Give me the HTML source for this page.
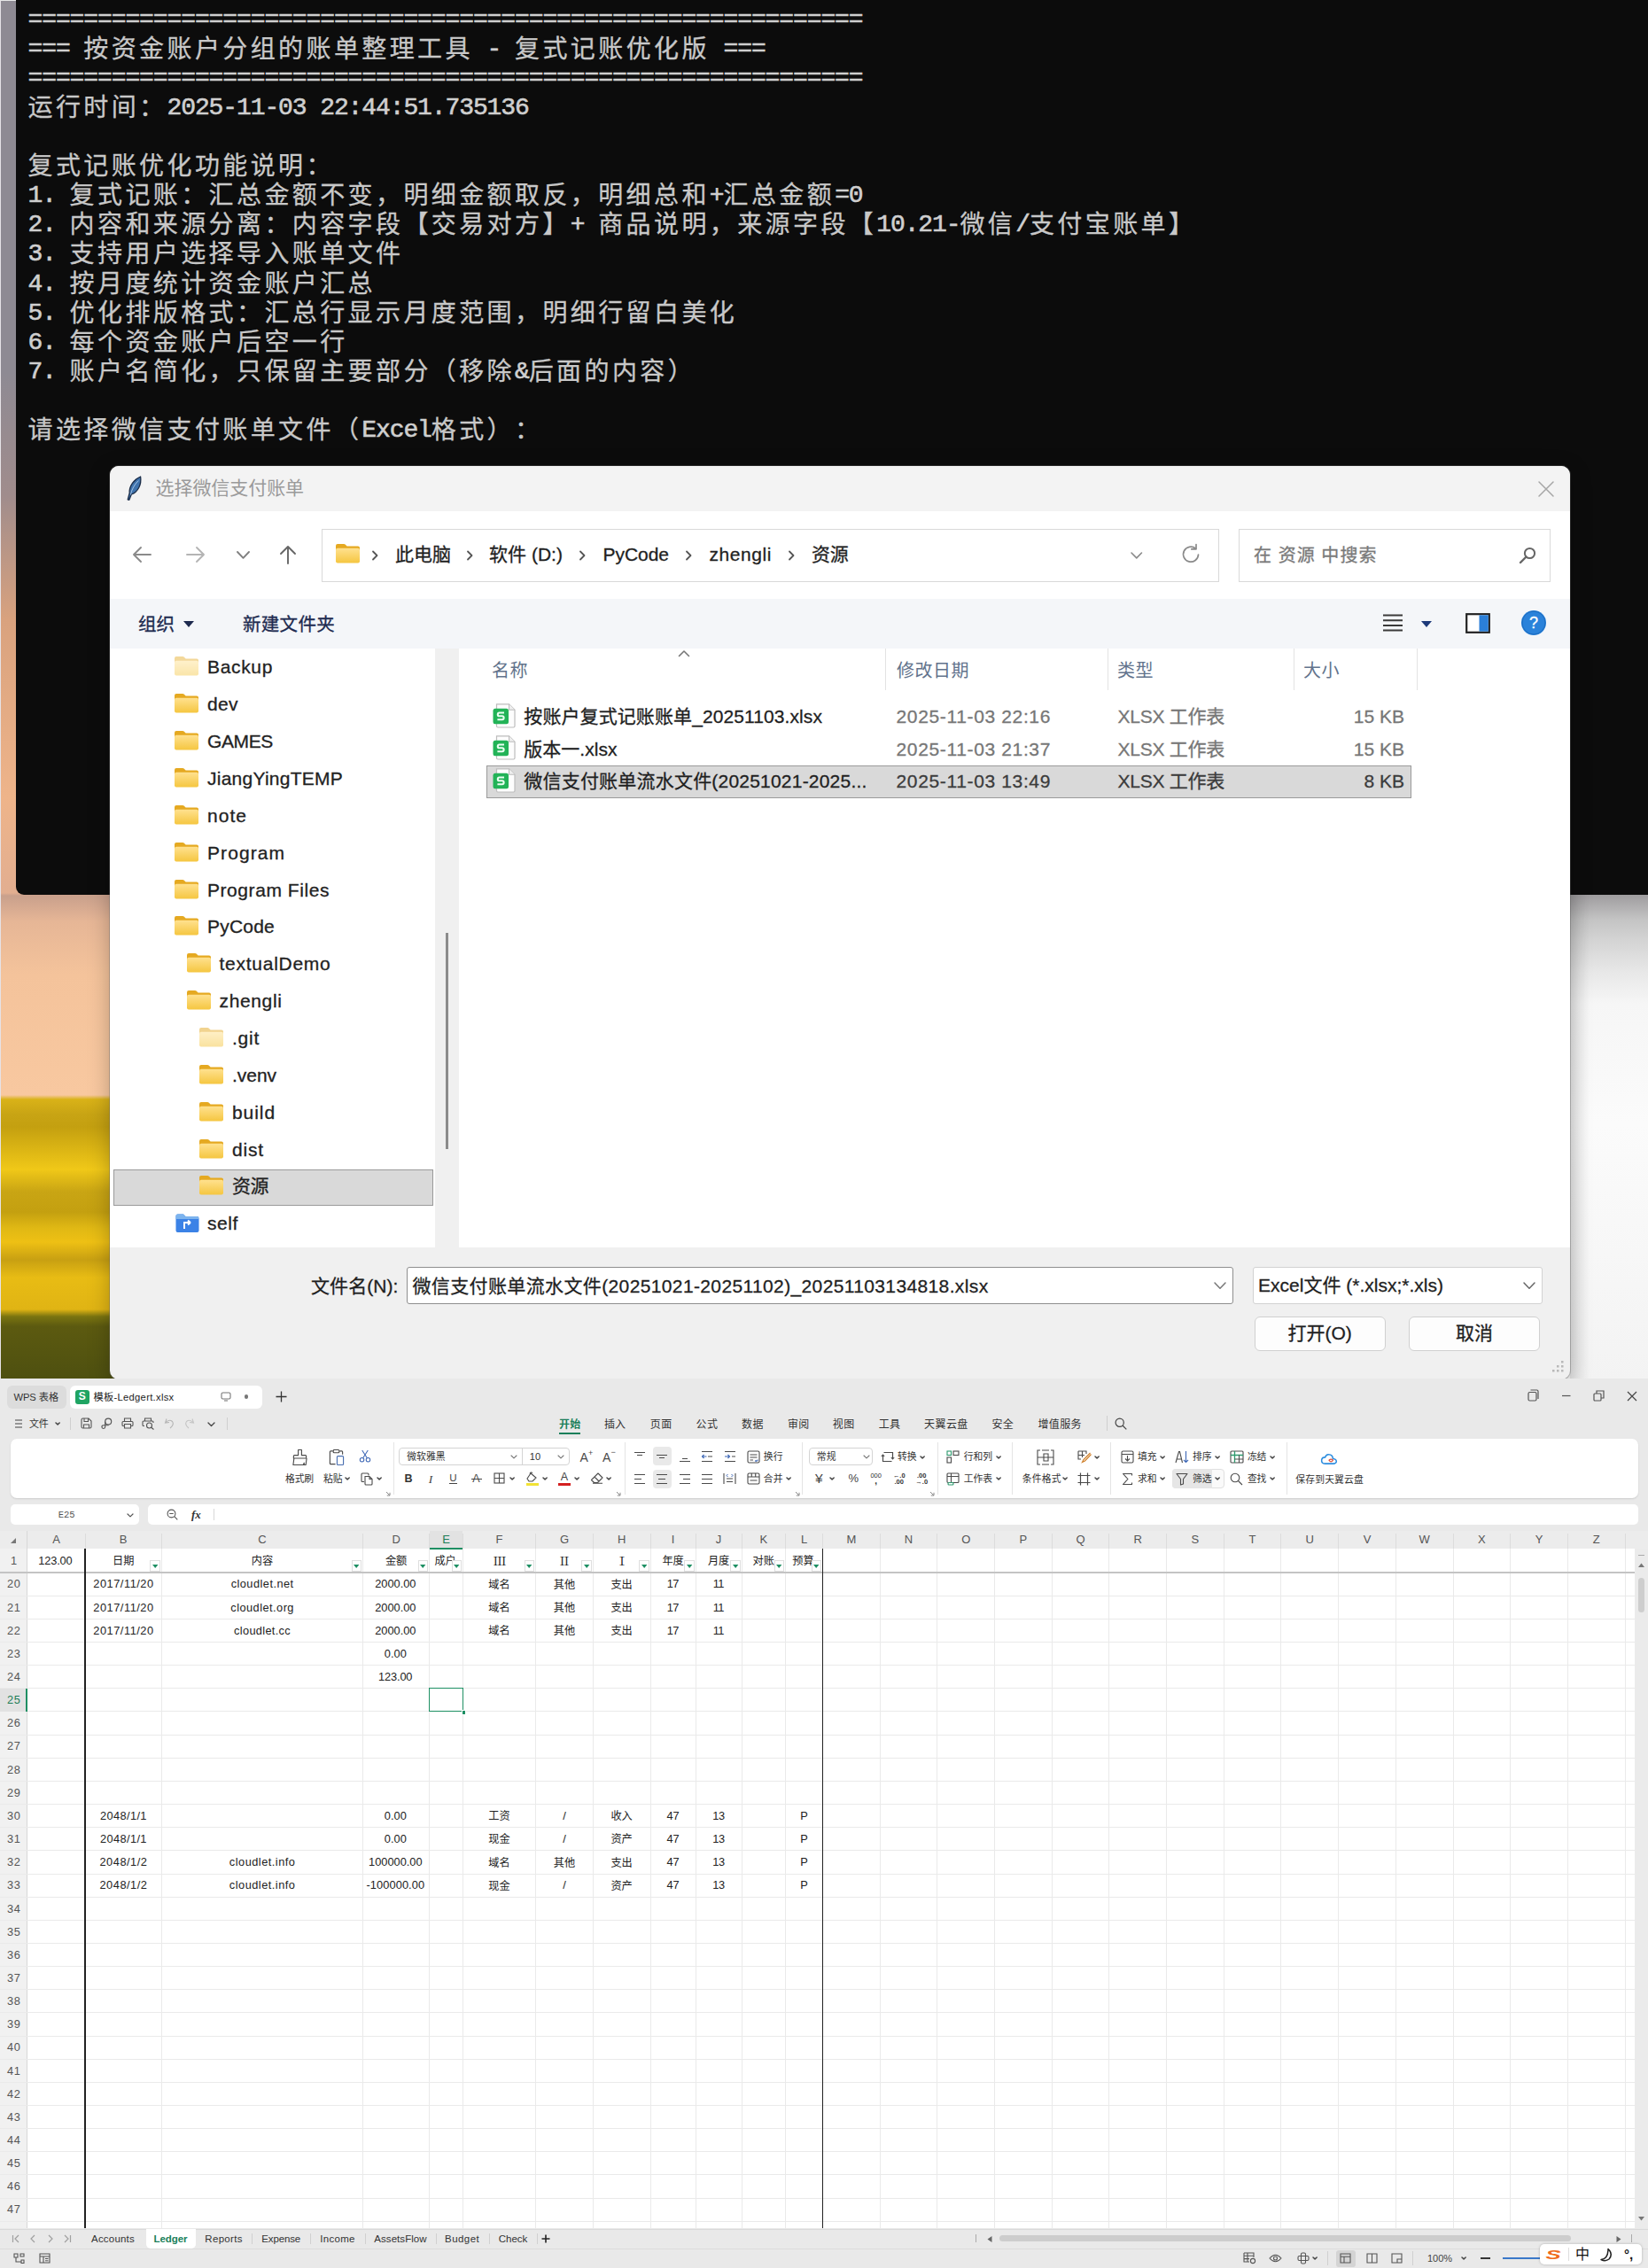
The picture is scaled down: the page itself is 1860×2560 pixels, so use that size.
<!DOCTYPE html>
<html lang="zh-CN"><head><meta charset="utf-8"><title>screenshot</title><style>
html,body{margin:0;padding:0;width:1860px;height:2560px;overflow:hidden;}
#root{position:absolute;left:0;top:0;width:1860px;height:2560px;overflow:hidden;}
body{width:1860px;height:2560px;position:relative;overflow:hidden;background:#fff;font-family:"Liberation Sans","Noto Sans CJK SC",sans-serif;}
.a{position:absolute;}
.t{position:absolute;white-space:nowrap;}
svg{overflow:visible;}
.term{text-spacing-trim:space-all;font-family:"Liberation Mono","Noto Sans CJK SC",monospace;color:#cfcfcf;}
.term .ln{height:33.12px;line-height:33.12px;white-space:pre;}
.term .l{font-size:28px;letter-spacing:-1.103px;-webkit-text-stroke:0.6px #cfcfcf;}
.term .c{font-size:28px;letter-spacing:3.4px;font-weight:400;position:relative;top:2px;-webkit-text-stroke:0.3px #c8c8c8;color:#c8c8c8;}
</style></head><body><div id="root">
<svg width="0" height="0" style="position:absolute"><defs>
<linearGradient id="fg" x1="0" y1="0" x2="0" y2="1"><stop offset="0" stop-color="#ffe18f"/><stop offset="1" stop-color="#f5c640"/></linearGradient>
<symbol id="fold" viewBox="0 0 29 25"><path d="M1 4 Q1 2 3 2 H10.2 Q11 2 11.6 2.6 L13.6 4.6 H26 Q28 4.6 28 6.6 V20 H1Z" fill="#e5a921"/><rect x="1" y="6.8" width="27" height="16.7" rx="2" fill="url(#fg)"/></symbol>
<symbol id="xls" viewBox="0 0 27 28"><path d="M5.5 0.8 H19.5 L26 7.3 V25.5 Q26 27 24.5 27 H7 Q5.5 27 5.5 25.5Z" fill="#fdfdfd" stroke="#bdbdbd" stroke-width="1.2"/><path d="M19.5 0.8 V7.3 H26" fill="#eee" stroke="#bdbdbd" stroke-width="1.1"/><rect x="1.5" y="5.8" width="17.5" height="17.5" rx="2.5" fill="#22b357"/><path d="M14 10.5 H8.6 Q6.8 10.5 6.8 12.4 Q6.8 14.3 8.6 14.3 H11.8 Q13.6 14.3 13.6 16.3 Q13.6 18.3 11.8 18.3 H6.4" fill="none" stroke="#e9fff1" stroke-width="2.1"/></symbol>
</defs></svg>
<div class="a" style="left:0;top:0;width:220px;height:1560px;background:linear-gradient(180deg,#8e8a93 0px,#8e8a93 420px,#a08c8c 560px,#d9a27e 700px,#eeb48a 900px,#e2ae90 1008px,#c9a08c 1011px,#e6b696 1040px,#f4c39b 1100px,#f8c8a0 1236px,#d9b218 1241px,#c8a414 1258px,#c4a010 1272px,#dab414 1296px,#f0c818 1320px,#c9a514 1345px,#c4a010 1368px,#e0b814 1386px,#eec014 1402px,#c8a012 1422px,#e8bc14 1442px,#e0b414 1478px,#7a7410 1486px,#5c5a10 1497px,#4e5010 1556px);"></div>
<div class="a" style="left:0;top:0;width:1860px;height:1.3px;background:#e8e8e8;"></div>
<div class="a" style="left:0;top:0;width:1.2px;height:1556px;background:#e6e2e6;"></div>
<div class="a" style="left:1700px;top:1008px;width:160px;height:552px;background:linear-gradient(180deg,#9c9a9c 0px,#a4a2a4 6px,#c4c4c4 30px,#d3d3d3 52px,#e8e8e8 90px,#f6f6f6 125px,#fbfbfb 260px,#f3f3f3 552px);"></div>
<div class="a" style="left:1772px;top:1008px;width:22px;height:552px;background:linear-gradient(90deg,rgba(0,0,0,.07),rgba(0,0,0,0));"></div>
<div class="a" style="left:17.5px;top:0;width:1843px;height:1010px;background:#0c0c0c;border-radius:0 0 0 9px;"></div>
<div class="a term" style="left:31.5px;top:5.6px;">
<div class="ln"><span class="l">============================================================</span></div>
<div class="ln"><span class="l">=== </span><span class="c">按资金账户分组的账单整理工具</span><span class="l"> - </span><span class="c">复式记账优化版</span><span class="l"> ===</span></div>
<div class="ln"><span class="l">============================================================</span></div>
<div class="ln"><span class="c">运行时间：</span><span class="l">2025-11-03 22:44:51.735136</span></div>
<div class="ln">&nbsp;</div>
<div class="ln"><span class="c">复式记账优化功能说明：</span></div>
<div class="ln"><span class="l">1. </span><span class="c">复式记账：汇总金额不变，明细金额取反，明细总和</span><span class="l">+</span><span class="c">汇总金额</span><span class="l">=0</span></div>
<div class="ln"><span class="l">2. </span><span class="c">内容和来源分离：内容字段【交易对方】</span><span class="l">+ </span><span class="c">商品说明，来源字段【</span><span class="l">10.21-</span><span class="c">微信</span><span class="l">/</span><span class="c">支付宝账单】</span></div>
<div class="ln"><span class="l">3. </span><span class="c">支持用户选择导入账单文件</span></div>
<div class="ln"><span class="l">4. </span><span class="c">按月度统计资金账户汇总</span></div>
<div class="ln"><span class="l">5. </span><span class="c">优化排版格式：汇总行显示月度范围，明细行留白美化</span></div>
<div class="ln"><span class="l">6. </span><span class="c">每个资金账户后空一行</span></div>
<div class="ln"><span class="l">7. </span><span class="c">账户名简化，只保留主要部分（移除</span><span class="l">&amp;</span><span class="c">后面的内容）</span></div>
<div class="ln">&nbsp;</div>
<div class="ln"><span class="c">请选择微信支付账单文件（</span><span class="l">Excel</span><span class="c">格式）：</span></div>
</div>
<div class="a" style="left:123.5px;top:525.5px;width:1648.5px;height:1031.0px;background:#f0f0f0;border-radius:10px;box-shadow:0 0 0 1px rgba(90,90,90,.35),0 6px 24px rgba(0,0,0,.25);overflow:hidden;">
</div>
<div class="a" style="left:123.5px;top:525.5px;width:1648.5px;height:51.0px;background:#f3f3f3;font-weight:400;-webkit-text-stroke:0.3px;border-radius:10px 10px 0 0;"></div>
<svg class="a" style="left:140.0px;top:536.5px;" width="24" height="30" viewBox="0 0 24 30"><path d="M18.6 1 C11.5 4 5.5 11.5 6.2 19.5 L4.2 26.8 L5.8 27.3 L8.3 21 C15.5 18.5 20 10 18.6 1Z" fill="#3f73ad" stroke="#1a2c47" stroke-width="1.3" stroke-linejoin="round"/><path d="M16.3 5.5 C11.5 10 8.8 15.5 7.3 21.5" stroke="#9fc0e2" stroke-width="1" fill="none"/></svg>
<span class="t" id="t1" style="top:535.8px;font-size:21px;line-height:29px;color:#9a9a9a;letter-spacing:-0.062px;left:175.5px;font-weight:400;-webkit-text-stroke:0.3px;font-weight:400;-webkit-text-stroke:0;">选择微信支付账单</span>
<svg class="a" style="left:1735.0px;top:542.0px;" width="20" height="20" viewBox="0 0 20 20"><path d="M2 2 L18 18 M18 2 L2 18" stroke="#a6a6a6" stroke-width="1.5" stroke-linecap="round"/></svg>
<div class="a" style="left:123.5px;top:576.5px;width:1648.5px;height:99.5px;background:#ffffff;font-weight:400;-webkit-text-stroke:0.3px;"></div>
<svg class="a" style="left:149.0px;top:616.0px;" width="22" height="20" viewBox="0 0 22 20"><path d="M21 10 H2 M10 2 L2 10 L10 18" fill="none" stroke="#8a8a8a" stroke-width="1.9" stroke-linecap="round" stroke-linejoin="round"/></svg>
<svg class="a" style="left:210.0px;top:616.0px;" width="22" height="20" viewBox="0 0 22 20"><path d="M1 10 H20 M12 2 L20 10 L12 18" fill="none" stroke="#b4b4b4" stroke-width="1.9" stroke-linecap="round" stroke-linejoin="round"/></svg>
<svg class="a" style="left:267.0px;top:621.6px;" width="15" height="9.8" viewBox="0 0 15 9.8"><path d="M1 1 L7.5 7.8 L14 1" fill="none" stroke="#808080" stroke-width="1.9" stroke-linecap="round" stroke-linejoin="round"/></svg>
<svg class="a" style="left:314.0px;top:615.0px;" width="22" height="22" viewBox="0 0 22 22"><path d="M11 21 V2 M3 10 L11 2 L19 10" fill="none" stroke="#666" stroke-width="1.9" stroke-linecap="round" stroke-linejoin="round"/></svg>
<div class="a" style="left:362.5px;top:596.5px;width:1013.5px;height:60.0px;background:#fff;font-weight:400;-webkit-text-stroke:0.3px;border:1.5px solid #d9d9d9;box-sizing:border-box;"></div>
<svg class="a" style="left:377.5px;top:612.0px;opacity:1.0" width="29" height="25" viewBox="0 0 29 25"><use href="#fold"/></svg>
<svg class="a" style="left:418.0px;top:620.0px;" width="10" height="14" viewBox="0 0 10 14"><path d="M3 2.5 L7.5 7 L3 11.5" fill="none" stroke="#555" stroke-width="1.8" stroke-linecap="round" stroke-linejoin="round"/></svg>
<span class="t" id="t2" style="top:611.0px;font-size:21px;line-height:29px;color:#1f1f1f;left:446.0px;font-weight:400;-webkit-text-stroke:0.3px;">此电脑</span>
<svg class="a" style="left:525.0px;top:620.0px;" width="10" height="14" viewBox="0 0 10 14"><path d="M3 2.5 L7.5 7 L3 11.5" fill="none" stroke="#555" stroke-width="1.8" stroke-linecap="round" stroke-linejoin="round"/></svg>
<span class="t" id="t3" style="top:611.0px;font-size:21px;line-height:29px;color:#1f1f1f;letter-spacing:0.025px;left:552.0px;font-weight:400;-webkit-text-stroke:0.3px;">软件 (D:)</span>
<svg class="a" style="left:652.0px;top:620.0px;" width="10" height="14" viewBox="0 0 10 14"><path d="M3 2.5 L7.5 7 L3 11.5" fill="none" stroke="#555" stroke-width="1.8" stroke-linecap="round" stroke-linejoin="round"/></svg>
<span class="t" id="t4" style="top:611.0px;font-size:21px;line-height:29px;color:#1f1f1f;letter-spacing:-0.036px;left:680.5px;font-weight:400;-webkit-text-stroke:0.3px;">PyCode</span>
<svg class="a" style="left:772.0px;top:620.0px;" width="10" height="14" viewBox="0 0 10 14"><path d="M3 2.5 L7.5 7 L3 11.5" fill="none" stroke="#555" stroke-width="1.8" stroke-linecap="round" stroke-linejoin="round"/></svg>
<span class="t" id="t5" style="top:611.0px;font-size:21px;line-height:29px;color:#1f1f1f;letter-spacing:0.562px;left:800.5px;font-weight:400;-webkit-text-stroke:0.3px;">zhengli</span>
<svg class="a" style="left:887.5px;top:620.0px;" width="10" height="14" viewBox="0 0 10 14"><path d="M3 2.5 L7.5 7 L3 11.5" fill="none" stroke="#555" stroke-width="1.8" stroke-linecap="round" stroke-linejoin="round"/></svg>
<span class="t" id="t6" style="top:611.0px;font-size:21px;line-height:29px;color:#1f1f1f;letter-spacing:-0.250px;left:916.0px;font-weight:400;-webkit-text-stroke:0.3px;">资源</span>
<svg class="a" style="left:1275.8px;top:622.5px;" width="13.5" height="8.899999999999999" viewBox="0 0 13.5 8.899999999999999"><path d="M1 1 L6.8 6.9 L12.5 1" fill="none" stroke="#8a8a8a" stroke-width="1.6" stroke-linecap="round" stroke-linejoin="round"/></svg>
<svg class="a" style="left:1331.0px;top:613.0px;" width="26" height="26" viewBox="0 0 26 26"><path d="M21.5 13 A8.5 8.5 0 1 1 18.5 6.2" fill="none" stroke="#8a8a8a" stroke-width="1.7" stroke-linecap="round"/><path d="M19 1.5 V6.8 H13.7" fill="none" stroke="#8a8a8a" stroke-width="1.7" stroke-linecap="round" stroke-linejoin="round"/></svg>
<div class="a" style="left:1398.0px;top:596.5px;width:351.5px;height:60.0px;background:#fff;font-weight:400;-webkit-text-stroke:0.3px;border:1.5px solid #d9d9d9;box-sizing:border-box;"></div>
<span class="t" id="t7" style="top:612.5px;font-size:20px;line-height:28px;color:#7a7a7a;letter-spacing:1.047px;left:1415.0px;font-weight:400;-webkit-text-stroke:0.3px;">在 资源 中搜索</span>
<svg class="a" style="left:1713.0px;top:616.0px;" width="22" height="22" viewBox="0 0 22 22"><circle cx="13.5" cy="8.5" r="5.6" fill="none" stroke="#666" stroke-width="2"/><path d="M9.5 12.5 L3 19" stroke="#666" stroke-width="2.4" stroke-linecap="round"/></svg>
<div class="a" style="left:123.5px;top:676.0px;width:1648.5px;height:56.0px;background:#f4f6f9;font-weight:400;-webkit-text-stroke:0.3px;"></div>
<span class="t" id="t8" style="top:689.5px;font-size:20.5px;line-height:29px;color:#1d2a4f;left:156.0px;font-weight:400;-webkit-text-stroke:0.3px;">组织</span>
<svg class="a" style="left:206.0px;top:699.5px;" width="14" height="9" viewBox="0 0 14 9"><path d="M1 1 H13 L7 8Z" fill="#1d2a4f"/></svg>
<span class="t" id="t9" style="top:689.5px;font-size:20.5px;line-height:29px;color:#1d2a4f;letter-spacing:0.300px;left:274.0px;font-weight:400;-webkit-text-stroke:0.3px;">新建文件夹</span>
<svg class="a" style="left:1560.0px;top:692.0px;" width="24" height="22" viewBox="0 0 24 22"><path d="M1 2.5 H23 M1 8.2 H23 M1 13.9 H23 M1 19.6 H23" stroke="#3a3a3a" stroke-width="2"/></svg>
<svg class="a" style="left:1603.0px;top:699.5px;" width="14" height="9" viewBox="0 0 14 9"><path d="M1 1 H13 L7 8Z" fill="#1d3a7a"/></svg>
<svg class="a" style="left:1654.0px;top:691.5px;" width="28" height="23" viewBox="0 0 28 23"><rect x="1.2" y="1.2" width="25.6" height="20.6" fill="#fff" stroke="#222" stroke-width="2.2"/><rect x="15.5" y="2.3" width="10.3" height="18.4" fill="#2b7fd8"/></svg>
<svg class="a" style="left:1716.0px;top:688.0px;" width="30" height="30" viewBox="0 0 30 30"><circle cx="15" cy="15" r="14" fill="#2a82da"/><circle cx="15" cy="15" r="13" fill="none" stroke="#1b6cc0" stroke-width="1"/></svg>
<span class="t" id="t10" style="top:691.0px;font-size:18px;line-height:25px;color:#fff;font-weight:700;left:1431.0px;width:600px;text-align:center;font-weight:400;-webkit-text-stroke:0.3px;">?</span>
<div class="a" style="left:123.5px;top:732.0px;width:367.0px;height:676.0px;background:#ffffff;font-weight:400;-webkit-text-stroke:0.3px;"></div>
<div class="a" style="left:490.5px;top:732.0px;width:27.5px;height:676.0px;background:#f0f0f0;font-weight:400;-webkit-text-stroke:0.3px;"></div>
<div class="a" style="left:503.0px;top:1053.0px;width:3.0px;height:244.0px;background:#8b8b8b;font-weight:400;-webkit-text-stroke:0.3px;"></div>
<div class="a" style="left:518.0px;top:732.0px;width:1254.0px;height:676.0px;background:#ffffff;font-weight:400;-webkit-text-stroke:0.3px;"></div>
<div class="a" style="left:127.5px;top:1319.5px;width:361.0px;height:41.0px;background:#d9d9d9;font-weight:400;-webkit-text-stroke:0.3px;border:1.5px solid #9a9a9a;box-sizing:border-box;"></div>
<svg class="a" style="left:195.7px;top:739.3px;opacity:0.45" width="29" height="25" viewBox="0 0 29 25"><use href="#fold"/></svg>
<span class="t" id="t11" style="top:738.3px;font-size:21px;line-height:29px;color:#222;letter-spacing:0.659px;left:234.0px;font-weight:400;-webkit-text-stroke:0.3px;">Backup</span>
<svg class="a" style="left:195.7px;top:781.1px;opacity:1" width="29" height="25" viewBox="0 0 29 25"><use href="#fold"/></svg>
<span class="t" id="t12" style="top:780.1px;font-size:21px;line-height:29px;color:#222;letter-spacing:0.380px;left:234.0px;font-weight:400;-webkit-text-stroke:0.3px;">dev</span>
<svg class="a" style="left:195.7px;top:823.0px;opacity:1" width="29" height="25" viewBox="0 0 29 25"><use href="#fold"/></svg>
<span class="t" id="t13" style="top:822.0px;font-size:21px;line-height:29px;color:#222;letter-spacing:-0.372px;left:234.0px;font-weight:400;-webkit-text-stroke:0.3px;">GAMES</span>
<svg class="a" style="left:195.7px;top:864.9px;opacity:1" width="29" height="25" viewBox="0 0 29 25"><use href="#fold"/></svg>
<span class="t" id="t14" style="top:863.9px;font-size:21px;line-height:29px;color:#222;letter-spacing:0.246px;left:234.0px;font-weight:400;-webkit-text-stroke:0.3px;">JiangYingTEMP</span>
<svg class="a" style="left:195.7px;top:906.7px;opacity:1" width="29" height="25" viewBox="0 0 29 25"><use href="#fold"/></svg>
<span class="t" id="t15" style="top:905.7px;font-size:21px;line-height:29px;color:#222;letter-spacing:1.031px;left:234.0px;font-weight:400;-webkit-text-stroke:0.3px;">note</span>
<svg class="a" style="left:195.7px;top:948.6px;opacity:1" width="29" height="25" viewBox="0 0 29 25"><use href="#fold"/></svg>
<span class="t" id="t16" style="top:947.6px;font-size:21px;line-height:29px;color:#222;letter-spacing:1.067px;left:234.0px;font-weight:400;-webkit-text-stroke:0.3px;">Program</span>
<svg class="a" style="left:195.7px;top:990.5px;opacity:1" width="29" height="25" viewBox="0 0 29 25"><use href="#fold"/></svg>
<span class="t" id="t17" style="top:989.5px;font-size:21px;line-height:29px;color:#222;letter-spacing:0.561px;left:234.0px;font-weight:400;-webkit-text-stroke:0.3px;">Program Files</span>
<svg class="a" style="left:195.7px;top:1032.3px;opacity:1" width="29" height="25" viewBox="0 0 29 25"><use href="#fold"/></svg>
<span class="t" id="t18" style="top:1031.3px;font-size:21px;line-height:29px;color:#222;letter-spacing:0.214px;left:234.0px;font-weight:400;-webkit-text-stroke:0.3px;">PyCode</span>
<svg class="a" style="left:209.7px;top:1074.2px;opacity:1" width="29" height="25" viewBox="0 0 29 25"><use href="#fold"/></svg>
<span class="t" id="t19" style="top:1073.2px;font-size:21px;line-height:29px;color:#222;letter-spacing:0.737px;left:247.5px;font-weight:400;-webkit-text-stroke:0.3px;">textualDemo</span>
<svg class="a" style="left:209.7px;top:1116.1px;opacity:1" width="29" height="25" viewBox="0 0 29 25"><use href="#fold"/></svg>
<span class="t" id="t20" style="top:1115.1px;font-size:21px;line-height:29px;color:#222;letter-spacing:0.634px;left:247.5px;font-weight:400;-webkit-text-stroke:0.3px;">zhengli</span>
<svg class="a" style="left:224.2px;top:1157.9px;opacity:0.5" width="29" height="25" viewBox="0 0 29 25"><use href="#fold"/></svg>
<span class="t" id="t21" style="top:1156.9px;font-size:21px;line-height:29px;color:#222;letter-spacing:0.746px;left:262.0px;font-weight:400;-webkit-text-stroke:0.3px;">.git</span>
<svg class="a" style="left:224.2px;top:1199.8px;opacity:1" width="29" height="25" viewBox="0 0 29 25"><use href="#fold"/></svg>
<span class="t" id="t22" style="top:1198.8px;font-size:21px;line-height:29px;color:#222;letter-spacing:-0.041px;left:262.0px;font-weight:400;-webkit-text-stroke:0.3px;">.venv</span>
<svg class="a" style="left:224.2px;top:1241.7px;opacity:1" width="29" height="25" viewBox="0 0 29 25"><use href="#fold"/></svg>
<span class="t" id="t23" style="top:1240.7px;font-size:21px;line-height:29px;color:#222;letter-spacing:0.925px;left:262.0px;font-weight:400;-webkit-text-stroke:0.3px;">build</span>
<svg class="a" style="left:224.2px;top:1283.5px;opacity:1" width="29" height="25" viewBox="0 0 29 25"><use href="#fold"/></svg>
<span class="t" id="t24" style="top:1282.5px;font-size:21px;line-height:29px;color:#222;letter-spacing:0.828px;left:262.0px;font-weight:400;-webkit-text-stroke:0.3px;">dist</span>
<svg class="a" style="left:224.2px;top:1325.4px;opacity:1" width="29" height="25" viewBox="0 0 29 25"><use href="#fold"/></svg>
<span class="t" id="t25" style="top:1324.4px;font-size:21px;line-height:29px;color:#222;letter-spacing:-0.500px;left:262.0px;font-weight:400;-webkit-text-stroke:0.3px;">资源</span>
<svg class="a" style="left:196.5px;top:1368.0px;" width="29" height="25" viewBox="0 0 29 25"><path d="M1.5 4.5 Q1.5 2.5 3.5 2.5 H10 L12.5 5 H25.5 Q27.5 5 27.5 7 V21 Q27.5 23 25.5 23 H3.5 Q1.5 23 1.5 21Z" fill="#3b82e6"/><path d="M1.5 4.5 Q1.5 2.5 3.5 2.5 H10 L12.5 5 H27 V8 H1.5Z" fill="#7db4ee"/><path d="M11 19 V12 H18 M18 12 L15 9.5 M18 12 L15 14.5" stroke="#fff" stroke-width="2" fill="none"/></svg>
<span class="t" id="t26" style="top:1366.0px;font-size:21px;line-height:29px;color:#222;letter-spacing:0.578px;left:234.0px;font-weight:400;-webkit-text-stroke:0.3px;">self</span>
<div class="a" style="left:999.0px;top:732.0px;width:1.3px;height:47.0px;background:#e3e3e3;font-weight:400;-webkit-text-stroke:0.3px;"></div>
<div class="a" style="left:1249.5px;top:732.0px;width:1.3px;height:47.0px;background:#e3e3e3;font-weight:400;-webkit-text-stroke:0.3px;"></div>
<div class="a" style="left:1459.5px;top:732.0px;width:1.3px;height:47.0px;background:#e3e3e3;font-weight:400;-webkit-text-stroke:0.3px;"></div>
<div class="a" style="left:1598.5px;top:732.0px;width:1.3px;height:47.0px;background:#e3e3e3;font-weight:400;-webkit-text-stroke:0.3px;"></div>
<span class="t" id="t27" style="top:742.5px;font-size:20px;line-height:28px;color:#62738c;letter-spacing:0.500px;left:555.0px;font-weight:400;-webkit-text-stroke:0.3px;font-weight:400;-webkit-text-stroke:0;">名称</span>
<span class="t" id="t28" style="top:742.5px;font-size:20px;line-height:28px;color:#62738c;letter-spacing:0.500px;left:1012.0px;font-weight:400;-webkit-text-stroke:0.3px;font-weight:400;-webkit-text-stroke:0;">修改日期</span>
<span class="t" id="t29" style="top:742.5px;font-size:20px;line-height:28px;color:#62738c;letter-spacing:0.500px;left:1261.0px;font-weight:400;-webkit-text-stroke:0.3px;font-weight:400;-webkit-text-stroke:0;">类型</span>
<span class="t" id="t30" style="top:742.5px;font-size:20px;line-height:28px;color:#62738c;letter-spacing:0.500px;left:1471.0px;font-weight:400;-webkit-text-stroke:0.3px;font-weight:400;-webkit-text-stroke:0;">大小</span>
<svg class="a" style="left:765.0px;top:733.0px;" width="14" height="9" viewBox="0 0 14 9"><path d="M1.5 7.5 L7 2 L12.5 7.5" fill="none" stroke="#777" stroke-width="1.6" stroke-linecap="round" stroke-linejoin="round"/></svg>
<div class="a" style="left:549.0px;top:864.3px;width:1043.5px;height:36.5px;background:#d9d9d9;font-weight:400;-webkit-text-stroke:0.3px;border:1.5px solid #9a9a9a;box-sizing:border-box;"></div>
<svg class="a" style="left:555.0px;top:793.5px" width="27" height="28" viewBox="0 0 27 28"><use href="#xls"/></svg>
<span class="t" id="t31" style="top:794.3px;font-size:21px;line-height:29px;color:#1f1f1f;letter-spacing:0.093px;left:591.3px;font-weight:400;-webkit-text-stroke:0.3px;">按账户复式记账账单_20251103.xlsx</span>
<span class="t" id="t32" style="top:794.3px;font-size:21px;line-height:29px;color:#777777;letter-spacing:0.641px;left:1011.5px;font-weight:400;-webkit-text-stroke:0.3px;">2025-11-03 22:16</span>
<span class="t" id="t33" style="top:794.3px;font-size:21px;line-height:29px;color:#777777;letter-spacing:-0.256px;left:1261.5px;font-weight:400;-webkit-text-stroke:0.3px;">XLSX 工作表</span>
<span class="t" id="t34" style="top:794.3px;font-size:21px;line-height:29px;color:#777777;left:985.0px;width:600px;text-align:right;font-weight:400;-webkit-text-stroke:0.3px;">15 KB</span>
<svg class="a" style="left:555.0px;top:830.0px" width="27" height="28" viewBox="0 0 27 28"><use href="#xls"/></svg>
<span class="t" id="t35" style="top:830.8px;font-size:21px;line-height:29px;color:#1f1f1f;letter-spacing:0.025px;left:591.3px;font-weight:400;-webkit-text-stroke:0.3px;">版本一.xlsx</span>
<span class="t" id="t36" style="top:830.8px;font-size:21px;line-height:29px;color:#777777;letter-spacing:0.641px;left:1011.5px;font-weight:400;-webkit-text-stroke:0.3px;">2025-11-03 21:37</span>
<span class="t" id="t37" style="top:830.8px;font-size:21px;line-height:29px;color:#777777;letter-spacing:-0.256px;left:1261.5px;font-weight:400;-webkit-text-stroke:0.3px;">XLSX 工作表</span>
<span class="t" id="t38" style="top:830.8px;font-size:21px;line-height:29px;color:#777777;left:985.0px;width:600px;text-align:right;font-weight:400;-webkit-text-stroke:0.3px;">15 KB</span>
<svg class="a" style="left:555.0px;top:866.5px" width="27" height="28" viewBox="0 0 27 28"><use href="#xls"/></svg>
<span class="t" id="t39" style="top:867.3px;font-size:21px;line-height:29px;color:#1f1f1f;letter-spacing:0.206px;left:591.3px;font-weight:400;-webkit-text-stroke:0.3px;">微信支付账单流水文件(20251021-2025...</span>
<span class="t" id="t40" style="top:867.3px;font-size:21px;line-height:29px;color:#3c3c3c;letter-spacing:0.641px;left:1011.5px;font-weight:400;-webkit-text-stroke:0.3px;">2025-11-03 13:49</span>
<span class="t" id="t41" style="top:867.3px;font-size:21px;line-height:29px;color:#3c3c3c;letter-spacing:-0.256px;left:1261.5px;font-weight:400;-webkit-text-stroke:0.3px;">XLSX 工作表</span>
<span class="t" id="t42" style="top:867.3px;font-size:21px;line-height:29px;color:#3c3c3c;left:985.0px;width:600px;text-align:right;font-weight:400;-webkit-text-stroke:0.3px;">8 KB</span>
<span class="t" id="t43" style="top:1437.1px;font-size:21px;line-height:29px;color:#1f1f1f;letter-spacing:0.071px;left:351.0px;font-weight:400;-webkit-text-stroke:0.3px;">文件名(N):</span>
<div class="a" style="left:458.5px;top:1430.3px;width:933.0px;height:42.2px;background:#fff;font-weight:400;-webkit-text-stroke:0.3px;border:1.5px solid #8e8e8e;box-sizing:border-box;border-radius:3px;"></div>
<span class="t" id="t44" style="top:1437.1px;font-size:21px;line-height:29px;color:#1f1f1f;letter-spacing:0.369px;left:465.5px;font-weight:400;-webkit-text-stroke:0.3px;">微信支付账单流水文件(20251021-20251102)_20251103134818.xlsx</span>
<svg class="a" style="left:1369.5px;top:1447.4px;" width="14" height="9.2" viewBox="0 0 14 9.2"><path d="M1 1 L7.0 7.2 L13 1" fill="none" stroke="#777" stroke-width="1.5" stroke-linecap="round" stroke-linejoin="round"/></svg>
<div class="a" style="left:1413.5px;top:1430.3px;width:327.0px;height:41.5px;background:#fff;font-weight:400;-webkit-text-stroke:0.3px;border:1.5px solid #d2d2d2;box-sizing:border-box;border-radius:3px;"></div>
<span class="t" id="t45" style="top:1436.0px;font-size:21px;line-height:29px;color:#1f1f1f;letter-spacing:0.006px;left:1420.0px;font-weight:400;-webkit-text-stroke:0.3px;">Excel文件 (*.xlsx;*.xls)</span>
<svg class="a" style="left:1719.0px;top:1446.9px;" width="14" height="9.2" viewBox="0 0 14 9.2"><path d="M1 1 L7.0 7.2 L13 1" fill="none" stroke="#666" stroke-width="1.5" stroke-linecap="round" stroke-linejoin="round"/></svg>
<div class="a" style="left:1416.0px;top:1486.0px;width:147.5px;height:38.5px;background:#fdfdfd;font-weight:400;-webkit-text-stroke:0.3px;border:1.5px solid #d0d0d0;box-sizing:border-box;border-radius:6px;"></div>
<span class="t" id="t46" style="top:1490.0px;font-size:21px;line-height:29px;color:#1f1f1f;left:1189.7px;width:600px;text-align:center;font-weight:400;-webkit-text-stroke:0.3px;">打开(O)</span>
<div class="a" style="left:1590.0px;top:1486.0px;width:148.0px;height:38.5px;background:#fdfdfd;font-weight:400;-webkit-text-stroke:0.3px;border:1.5px solid #d0d0d0;box-sizing:border-box;border-radius:6px;"></div>
<span class="t" id="t47" style="top:1490.0px;font-size:21px;line-height:29px;color:#1f1f1f;left:1364.0px;width:600px;text-align:center;font-weight:400;-webkit-text-stroke:0.3px;">取消</span>
<svg class="a" style="left:1751.0px;top:1535.0px;" width="16" height="16" viewBox="0 0 16 16"><g fill="#b8b8b8"><rect x="11" y="1" width="2.5" height="2.5"/><rect x="6" y="6" width="2.5" height="2.5"/><rect x="11" y="6" width="2.5" height="2.5"/><rect x="1" y="11" width="2.5" height="2.5"/><rect x="6" y="11" width="2.5" height="2.5"/><rect x="11" y="11" width="2.5" height="2.5"/></g></svg>
<div class="a" style="left:0.0px;top:1556.3px;width:1860.0px;height:1003.7px;background:#e9e9e9;"></div>
<div class="a" style="left:7.5px;top:1563.5px;width:67.0px;height:26.0px;background:#dcdcdc;border-radius:6px;"></div>
<span class="t" id="t48" style="top:1568.5px;font-size:11.2px;line-height:16px;color:#333;letter-spacing:-0.078px;left:15.5px;">WPS 表格</span>
<div class="a" style="left:78.5px;top:1563.5px;width:217.5px;height:26.0px;background:#fff;border-radius:6px;"></div>
<div class="a" style="left:85.0px;top:1569.0px;width:15.5px;height:15.5px;background:#1fa463;border-radius:3px;"></div>
<span class="t" id="t49" style="top:1568.3px;font-size:12px;line-height:17px;color:#fff;font-weight:700;left:-207.2px;width:600px;text-align:center;">S</span>
<span class="t" id="t50" style="top:1568.5px;font-size:11.2px;line-height:16px;color:#222;letter-spacing:0.305px;left:105.5px;">模板-Ledgert.xlsx</span>
<svg class="a" style="left:249.0px;top:1571.0px;" width="12" height="11" viewBox="0 0 12 11"><rect x="1" y="1" width="10" height="7" rx="1.5" fill="none" stroke="#777" stroke-width="1.1"/><path d="M4 10 H8" stroke="#777" stroke-width="1.1"/></svg>
<div class="a" style="left:275.7px;top:1574.3px;width:4.6px;height:4.6px;background:#777;border-radius:50%;"></div>
<svg class="a" style="left:311.0px;top:1570.0px;" width="13" height="13" viewBox="0 0 13 13"><path d="M6.5 0.5 V12.5 M0.5 6.5 H12.5" stroke="#333" stroke-width="1.3"/></svg>
<svg class="a" style="left:1724.0px;top:1568.0px;" width="13" height="14" viewBox="0 0 13 14"><rect x="1" y="3.5" width="9" height="9.5" rx="1.5" fill="none" stroke="#555" stroke-width="1.2"/><path d="M3.5 1 H10.5 Q12 1 12 2.5 V11" fill="none" stroke="#555" stroke-width="1.2"/></svg>
<svg class="a" style="left:1762.0px;top:1574.0px;" width="12" height="3" viewBox="0 0 12 3"><path d="M1 1.5 H10.5" stroke="#555" stroke-width="1.2"/></svg>
<svg class="a" style="left:1798.0px;top:1569.0px;" width="13" height="13" viewBox="0 0 13 13"><rect x="1" y="4" width="8" height="8" rx="1" fill="none" stroke="#555" stroke-width="1.2"/><path d="M4 4 V1 H12 V9 H9" fill="none" stroke="#555" stroke-width="1.2"/></svg>
<svg class="a" style="left:1836.0px;top:1570.0px;" width="12" height="12" viewBox="0 0 12 12"><path d="M1 1 L11 11 M11 1 L1 11" stroke="#444" stroke-width="1.2"/></svg>
<svg class="a" style="left:17.0px;top:1602.0px;" width="8" height="10" viewBox="0 0 8 10"><path d="M0 1 H8 M0 5 H8 M0 9 H8" stroke="#444" stroke-width="1.1"/></svg>
<span class="t" id="t51" style="top:1600.3px;font-size:11px;line-height:15px;color:#333;letter-spacing:-0.250px;left:33.0px;">文件</span>
<svg class="a" style="left:61.9px;top:1605.3px;" width="6.2" height="4.8100000000000005" viewBox="0 0 6.2 4.8100000000000005"><path d="M1 1 L3.10 2.91 L5.2 1" fill="none" stroke="#444" stroke-width="1.5" stroke-linecap="round" stroke-linejoin="round"/></svg>
<div class="a" style="left:79.0px;top:1600.0px;width:1.0px;height:14.0px;background:#cfcfcf;"></div>
<svg class="a" style="left:91.0px;top:1600.0px;" width="13" height="13" viewBox="0 0 13 13"><path d="M1 2.5 Q1 1 2.5 1 H9 L12 4 V10.5 Q12 12 10.5 12 H2.5 Q1 12 1 10.5Z M4 1 V4.5 H8.5 V1 M3.5 12 V8 H9.5 V12" fill="none" stroke="#555" stroke-width="1.1"/></svg>
<svg class="a" style="left:114.0px;top:1600.0px;" width="13" height="14" viewBox="0 0 13 14"><circle cx="8.2" cy="4.6" r="3.5" fill="none" stroke="#555" stroke-width="1.15"/><path d="M4.7 4.6 V10.6 A1.9 1.9 0 1 1 2.8 8.7 H8.6" fill="none" stroke="#555" stroke-width="1.15"/></svg>
<svg class="a" style="left:137.0px;top:1600.0px;" width="14" height="13" viewBox="0 0 14 13"><path d="M3.5 4.5 V1 H10.5 V4.5 M3.5 9.5 H2 Q1 9.5 1 8.5 V5.5 Q1 4.5 2 4.5 H12 Q13 4.5 13 5.5 V8.5 Q13 9.5 12 9.5 H10.5 M3.5 7.5 H10.5 V12 H3.5Z" fill="none" stroke="#555" stroke-width="1.1"/></svg>
<svg class="a" style="left:160.0px;top:1600.0px;" width="15" height="14" viewBox="0 0 15 14"><path d="M3.5 4 V1 H10.5 V4 M3 9.5 H2 Q1 9.5 1 8.5 V5 Q1 4 2 4 H12 Q13 4 13 5 V6" fill="none" stroke="#555" stroke-width="1.1"/><circle cx="8.5" cy="9" r="3" fill="none" stroke="#555" stroke-width="1.1"/><path d="M10.7 11.2 L13.5 13.5" stroke="#555" stroke-width="1.1"/></svg>
<svg class="a" style="left:185.0px;top:1600.0px;" width="12" height="13" viewBox="0 0 12 13"><path d="M3 1.5 L1.5 6 L6 5.5 M1.8 5.8 Q6 1.5 9.5 4.5 Q12 8 7 12" fill="none" stroke="#b5b5b5" stroke-width="1.1"/></svg>
<svg class="a" style="left:208.0px;top:1600.0px;" width="12" height="13" viewBox="0 0 12 13"><path d="M9 1.5 L10.5 6 L6 5.5 M10.2 5.8 Q6 1.5 2.5 4.5 Q0 8 5 12" fill="none" stroke="#c5c5c5" stroke-width="1.1"/></svg>
<svg class="a" style="left:233.5px;top:1604.6px;" width="9" height="6.3500000000000005" viewBox="0 0 9 6.3500000000000005"><path d="M1 1 L4.50 4.45 L8 1" fill="none" stroke="#444" stroke-width="1.3" stroke-linecap="round" stroke-linejoin="round"/></svg>
<div class="a" style="left:256.0px;top:1600.0px;width:1.0px;height:14.0px;background:#cfcfcf;"></div>
<span class="t" id="t52" style="top:1599.6px;font-size:12px;line-height:17px;color:#1a7f5a;font-weight:700;letter-spacing:0.142px;left:631.0px;">开始</span>
<div class="a" style="left:631.0px;top:1617.0px;width:24.3px;height:1.8px;background:#1a7f5a;"></div>
<span class="t" id="t53" style="top:1599.6px;font-size:12px;line-height:17px;color:#333;letter-spacing:0.092px;left:682.0px;">插入</span>
<span class="t" id="t54" style="top:1599.6px;font-size:12px;line-height:17px;color:#333;letter-spacing:0.342px;left:733.8px;">页面</span>
<span class="t" id="t55" style="top:1599.6px;font-size:12px;line-height:17px;color:#333;letter-spacing:0.342px;left:785.6px;">公式</span>
<span class="t" id="t56" style="top:1599.6px;font-size:12px;line-height:17px;color:#333;letter-spacing:0.492px;left:837.0px;">数据</span>
<span class="t" id="t57" style="top:1599.6px;font-size:12px;line-height:17px;color:#333;letter-spacing:0.292px;left:888.9px;">审阅</span>
<span class="t" id="t58" style="top:1599.6px;font-size:12px;line-height:17px;color:#333;letter-spacing:0.342px;left:939.8px;">视图</span>
<span class="t" id="t59" style="top:1599.6px;font-size:12px;line-height:17px;color:#333;letter-spacing:0.292px;left:991.7px;">工具</span>
<span class="t" id="t60" style="top:1599.6px;font-size:12px;line-height:17px;color:#333;letter-spacing:0.446px;left:1043.0px;">天翼云盘</span>
<span class="t" id="t61" style="top:1599.6px;font-size:12px;line-height:17px;color:#333;letter-spacing:0.342px;left:1119.5px;">安全</span>
<span class="t" id="t62" style="top:1599.6px;font-size:12px;line-height:17px;color:#333;letter-spacing:0.396px;left:1171.4px;">增值服务</span>
<div class="a" style="left:1248.5px;top:1598.0px;width:1.0px;height:17.0px;background:#cfcfcf;"></div>
<svg class="a" style="left:1258.0px;top:1600.0px;" width="14" height="14" viewBox="0 0 14 14"><circle cx="5.7" cy="5.7" r="4.6" fill="none" stroke="#444" stroke-width="1.2"/><path d="M9 9 L13.3 13.3" stroke="#444" stroke-width="1.2"/></svg>
<div class="a" style="left:11.5px;top:1624.0px;width:1837.5px;height:66.5px;background:#fff;border-radius:7px;box-shadow:0 1px 2px rgba(0,0,0,.12);"></div>
<svg class="a" style="left:329.0px;top:1635.0px;" width="19" height="20" viewBox="0 0 20 21"><path d="M8 1.5 H12 V8 H16.5 Q17.5 8 17.5 9 V11.5 H2.5 V9 Q2.5 8 3.5 8 H8Z M3 11.5 L2 19.5 H14 L15 17 V19.5 H17 L18 11.5" fill="none" stroke="#4a4a4a" stroke-width="1.2" stroke-linejoin="round"/></svg>
<span class="t" id="t63" style="top:1662.1px;font-size:10.8px;line-height:15px;color:#333;letter-spacing:-0.130px;left:322.0px;">格式刷</span>
<svg class="a" style="left:370.0px;top:1635.0px;" width="19" height="20" viewBox="0 0 20 21"><path d="M6 3 H3.5 Q2.5 3 2.5 4 V17.5 Q2.5 18.5 3.5 18.5 H9 M14 3 H16.5 Q17.5 3 17.5 4 V7" fill="none" stroke="#4a4a4a" stroke-width="1.2"/><rect x="6.5" y="1.5" width="7" height="3.5" rx="1" fill="none" stroke="#4a4a4a" stroke-width="1.2"/><rect x="11" y="9" width="7.5" height="10.5" rx="1" fill="none" stroke="#4a6fb0" stroke-width="1.2"/></svg>
<span class="t" id="t64" style="top:1662.1px;font-size:10.8px;line-height:15px;color:#333;letter-spacing:0.003px;left:365.0px;">粘贴</span>
<svg class="a" style="left:388.6px;top:1667.3px;" width="6.2" height="4.8100000000000005" viewBox="0 0 6.2 4.8100000000000005"><path d="M1 1 L3.10 2.91 L5.2 1" fill="none" stroke="#444" stroke-width="1.5" stroke-linecap="round" stroke-linejoin="round"/></svg>
<svg class="a" style="left:405.0px;top:1636.0px;" width="14" height="15" viewBox="0 0 14 16"><circle cx="3.3" cy="12.5" r="2.4" fill="none" stroke="#3c66b5" stroke-width="1.1"/><circle cx="10.7" cy="12.5" r="2.4" fill="none" stroke="#3c66b5" stroke-width="1.1"/><path d="M4.5 10.5 L10.5 1 M9.5 10.5 L3.5 1" stroke="#3c66b5" stroke-width="1.1"/></svg>
<svg class="a" style="left:407.0px;top:1662.0px;" width="14" height="15" viewBox="0 0 14 15"><path d="M9 3.5 V2 Q9 1 8 1 H2 Q1 1 1 2 V9.5 Q1 10.5 2 10.5 H4" fill="none" stroke="#4a4a4a" stroke-width="1.1"/><path d="M5 4.5 H10 L13 7.5 V13 Q13 14 12 14 H6 Q5 14 5 13Z M10 4.5 V7.5 H13" fill="none" stroke="#4a4a4a" stroke-width="1.1"/></svg>
<svg class="a" style="left:424.9px;top:1667.3px;" width="6.2" height="4.8100000000000005" viewBox="0 0 6.2 4.8100000000000005"><path d="M1 1 L3.10 2.91 L5.2 1" fill="none" stroke="#444" stroke-width="1.5" stroke-linecap="round" stroke-linejoin="round"/></svg>
<svg class="a" style="left:435.0px;top:1683.0px;" width="6" height="6" viewBox="0 0 6 6"><path d="M1 1 L5 5 M5 1.8 V5 H1.8" fill="none" stroke="#888" stroke-width="1"/></svg>
<div class="a" style="left:443.5px;top:1628.0px;width:1.0px;height:59.0px;background:#e4e4e4;"></div>
<div class="a" style="left:450.4px;top:1634.0px;width:192.9px;height:20.4px;background:#fff;border:1px solid #d4d4d4;box-sizing:border-box;border-radius:4px;"></div>
<div class="a" style="left:588.5px;top:1634.0px;width:1.0px;height:20.4px;background:#d4d4d4;"></div>
<span class="t" id="t65" style="top:1637.3px;font-size:10.8px;line-height:15px;color:#333;letter-spacing:0.028px;left:459.3px;">微软雅黑</span>
<svg class="a" style="left:575.6px;top:1642.0px;" width="8" height="5.800000000000001" viewBox="0 0 8 5.800000000000001"><path d="M1 1 L4.00 3.90 L7 1" fill="none" stroke="#777" stroke-width="1.1" stroke-linecap="round" stroke-linejoin="round"/></svg>
<span class="t" id="t66" style="top:1636.7px;font-size:11px;line-height:15px;color:#333;letter-spacing:0.225px;left:597.7px;">10</span>
<svg class="a" style="left:629.0px;top:1642.0px;" width="8" height="5.800000000000001" viewBox="0 0 8 5.800000000000001"><path d="M1 1 L4.00 3.90 L7 1" fill="none" stroke="#777" stroke-width="1.1" stroke-linecap="round" stroke-linejoin="round"/></svg>
<span class="t" id="t67" style="top:1634.7px;font-size:14px;line-height:20px;color:#4a4a4a;left:654.5px;">A</span>
<span class="t" id="t68" style="top:1633.7px;font-size:9px;line-height:13px;color:#4a4a4a;left:664.0px;">+</span>
<span class="t" id="t69" style="top:1634.7px;font-size:14px;line-height:20px;color:#4a4a4a;left:680.0px;">A</span>
<span class="t" id="t70" style="top:1633.3px;font-size:9px;line-height:13px;color:#4a4a4a;left:689.5px;">−</span>
<span class="t" id="t71" style="top:1660.0px;font-size:12.5px;line-height:18px;color:#333;font-weight:700;left:161.0px;width:600px;text-align:center;">B</span>
<span class="t" id="t72" style="top:1659.5px;font-size:13.5px;line-height:19px;color:#444;left:186.0px;width:600px;text-align:center;font-style:italic;font-family:'Liberation Serif',serif;">I</span>
<span class="t" id="t73" style="top:1660.2px;font-size:11.5px;line-height:16px;color:#444;left:211.5px;width:600px;text-align:center;">U</span>
<div class="a" style="left:507.0px;top:1673.6px;width:9.0px;height:1.1px;background:#444;"></div>
<span class="t" id="t74" style="top:1660.0px;font-size:12.5px;line-height:18px;color:#444;left:237.5px;width:600px;text-align:center;">A</span>
<div class="a" style="left:531.5px;top:1668.5px;width:12.0px;height:1.1px;background:#444;"></div>
<svg class="a" style="left:557.0px;top:1662.0px;" width="13" height="13" viewBox="0 0 13 13"><rect x="1" y="1" width="11" height="11" fill="none" stroke="#4a4a4a" stroke-width="1.1"/><path d="M6.5 1 V12 M1 6.5 H12" stroke="#4a4a4a" stroke-width="1.1"/></svg>
<svg class="a" style="left:575.2px;top:1667.3px;" width="6.2" height="4.8100000000000005" viewBox="0 0 6.2 4.8100000000000005"><path d="M1 1 L3.10 2.91 L5.2 1" fill="none" stroke="#444" stroke-width="1.5" stroke-linecap="round" stroke-linejoin="round"/></svg>
<svg class="a" style="left:594.0px;top:1661.0px;" width="13" height="12" viewBox="0 0 13 12"><path d="M5 2 L11 7 L7 11 H3 L1 8Z M4 2.5 Q5 0 7 1.5" fill="none" stroke="#4a4a4a" stroke-width="1.1"/></svg>
<div class="a" style="left:594.0px;top:1673.5px;width:13.5px;height:3.0px;background:#f2e235;"></div>
<svg class="a" style="left:611.6px;top:1667.3px;" width="6.2" height="4.8100000000000005" viewBox="0 0 6.2 4.8100000000000005"><path d="M1 1 L3.10 2.91 L5.2 1" fill="none" stroke="#444" stroke-width="1.5" stroke-linecap="round" stroke-linejoin="round"/></svg>
<span class="t" id="t75" style="top:1658.0px;font-size:12.5px;line-height:18px;color:#444;left:336.9px;width:600px;text-align:center;">A</span>
<div class="a" style="left:630.0px;top:1673.5px;width:13.5px;height:3.0px;background:#d42020;"></div>
<svg class="a" style="left:648.1px;top:1667.3px;" width="6.2" height="4.8100000000000005" viewBox="0 0 6.2 4.8100000000000005"><path d="M1 1 L3.10 2.91 L5.2 1" fill="none" stroke="#444" stroke-width="1.5" stroke-linecap="round" stroke-linejoin="round"/></svg>
<svg class="a" style="left:666.0px;top:1662.0px;" width="15" height="13" viewBox="0 0 15 13"><path d="M9 1 L14 6 L8.5 11.5 H4.5 L1.5 8.5Z M5 5 L10 10 M3 12.3 H14" fill="none" stroke="#4a4a4a" stroke-width="1.1" stroke-linejoin="round"/></svg>
<svg class="a" style="left:684.3px;top:1667.3px;" width="6.2" height="4.8100000000000005" viewBox="0 0 6.2 4.8100000000000005"><path d="M1 1 L3.10 2.91 L5.2 1" fill="none" stroke="#444" stroke-width="1.5" stroke-linecap="round" stroke-linejoin="round"/></svg>
<svg class="a" style="left:695.0px;top:1683.0px;" width="6" height="6" viewBox="0 0 6 6"><path d="M1 1 L5 5 M5 1.8 V5 H1.8" fill="none" stroke="#888" stroke-width="1"/></svg>
<div class="a" style="left:704.5px;top:1628.0px;width:1.0px;height:59.0px;background:#e4e4e4;"></div>
<div class="a" style="left:737.0px;top:1633.0px;width:21.0px;height:21.0px;background:#e9e9e9;border-radius:4px;"></div>
<div class="a" style="left:737.0px;top:1658.7px;width:21.0px;height:21.3px;background:#e9e9e9;border-radius:4px;"></div>
<svg class="a" style="left:715.0px;top:1637.0px;" width="14" height="14" viewBox="0 0 14 14"><path d="M1 2.5 H13 M4 5.5 H10 " stroke="#4a4a4a" stroke-width="1.2" fill="none"/></svg>
<svg class="a" style="left:740.0px;top:1637.0px;" width="14" height="14" viewBox="0 0 14 14"><path d="M1 5.5 H13 M4 8.5 H10 " stroke="#4a4a4a" stroke-width="1.2" fill="none"/></svg>
<svg class="a" style="left:766.0px;top:1637.0px;" width="14" height="14" viewBox="0 0 14 14"><path d="M4 9.5 H10 M1 12.5 H13 " stroke="#4a4a4a" stroke-width="1.2" fill="none"/></svg>
<svg class="a" style="left:791.0px;top:1637.0px;" width="14" height="14" viewBox="0 0 14 14"><path d="M1 1.5 H13 M8 7 H13 M1 12.5 H13" stroke="#4a4a4a" stroke-width="1.1" fill="none"/><path d="M6.5 7 H1.5 M3.5 5 L1.5 7 L3.5 9" stroke="#3c66b5" stroke-width="1.1" fill="none"/></svg>
<svg class="a" style="left:817.0px;top:1637.0px;" width="14" height="14" viewBox="0 0 14 14"><path d="M1 1.5 H13 M9 7 H13 M1 12.5 H13" stroke="#4a4a4a" stroke-width="1.1" fill="none"/><path d="M1 7 H6.5 M4.5 5 L6.5 7 L4.5 9" stroke="#3c66b5" stroke-width="1.1" fill="none"/></svg>
<svg class="a" style="left:843.0px;top:1637.0px;" width="15" height="15" viewBox="0 0 15 15"><rect x="1" y="1" width="13" height="13" rx="1.5" fill="none" stroke="#4a4a4a" stroke-width="1.1"/><path d="M3.5 5 H11.5 M3.5 8 H11.5 M3.5 11 H7" stroke="#4a4a4a" stroke-width="1.1"/><path d="M12 10.5 V12 H9.5 M10.5 11 L9.5 12 L10.5 13" stroke="#3c66b5" stroke-width="1" fill="none"/></svg>
<span class="t" id="t76" style="top:1637.3px;font-size:10.8px;line-height:15px;color:#333;letter-spacing:0.053px;left:861.8px;">换行</span>
<svg class="a" style="left:715.0px;top:1662.0px;" width="14" height="14" viewBox="0 0 14 14"><path d="M1 2.5 H13 M1 7.5 H9 M1 12.5 H13 " stroke="#4a4a4a" stroke-width="1.2" fill="none"/></svg>
<svg class="a" style="left:740.0px;top:1662.0px;" width="14" height="14" viewBox="0 0 14 14"><path d="M1 2.5 H13 M3 7.5 H11 M1 12.5 H13 " stroke="#4a4a4a" stroke-width="1.2" fill="none"/></svg>
<svg class="a" style="left:766.0px;top:1662.0px;" width="14" height="14" viewBox="0 0 14 14"><path d="M1 2.5 H13 M5 7.5 H13 M1 12.5 H13 " stroke="#4a4a4a" stroke-width="1.2" fill="none"/></svg>
<svg class="a" style="left:791.0px;top:1662.0px;" width="14" height="14" viewBox="0 0 14 14"><path d="M1 2.5 H13 M1 7.5 H13 M1 12.5 H13 " stroke="#4a4a4a" stroke-width="1.2" fill="none"/></svg>
<svg class="a" style="left:816.0px;top:1662.0px;" width="15" height="14" viewBox="0 0 15 14"><path d="M1 1 V13 M14 1 V13 M4 7 H11 M4 10.5 H11" stroke="#4a4a4a" stroke-width="1.1" fill="none"/><path d="M5.5 2 L4 3.5 L5.5 5 M9.5 2 L11 3.5 L9.5 5" stroke="#3c66b5" stroke-width="1" fill="none"/></svg>
<svg class="a" style="left:843.0px;top:1662.0px;" width="15" height="14" viewBox="0 0 15 14"><rect x="1" y="1" width="13" height="12" rx="1.5" fill="none" stroke="#4a4a4a" stroke-width="1.1"/><path d="M1 5 H14 M5.3 1 V5 M9.7 1 V5 M3.5 9 H11.5" stroke="#4a4a4a" stroke-width="1.1"/></svg>
<span class="t" id="t77" style="top:1662.1px;font-size:10.8px;line-height:15px;color:#333;letter-spacing:0.053px;left:861.8px;">合并</span>
<svg class="a" style="left:886.9px;top:1667.3px;" width="6.2" height="4.8100000000000005" viewBox="0 0 6.2 4.8100000000000005"><path d="M1 1 L3.10 2.91 L5.2 1" fill="none" stroke="#444" stroke-width="1.5" stroke-linecap="round" stroke-linejoin="round"/></svg>
<svg class="a" style="left:897.0px;top:1683.0px;" width="6" height="6" viewBox="0 0 6 6"><path d="M1 1 L5 5 M5 1.8 V5 H1.8" fill="none" stroke="#888" stroke-width="1"/></svg>
<div class="a" style="left:905.0px;top:1628.0px;width:1.0px;height:59.0px;background:#e4e4e4;"></div>
<div class="a" style="left:912.8px;top:1634.0px;width:72.6px;height:20.4px;background:#fff;border:1px solid #d4d4d4;box-sizing:border-box;border-radius:4px;"></div>
<span class="t" id="t78" style="top:1637.3px;font-size:10.8px;line-height:15px;color:#333;letter-spacing:0.353px;left:921.7px;">常规</span>
<svg class="a" style="left:973.8px;top:1642.0px;" width="8" height="5.800000000000001" viewBox="0 0 8 5.800000000000001"><path d="M1 1 L4.00 3.90 L7 1" fill="none" stroke="#777" stroke-width="1.1" stroke-linecap="round" stroke-linejoin="round"/></svg>
<svg class="a" style="left:994.0px;top:1637.0px;" width="16" height="15" viewBox="0 0 16 15"><path d="M3.5 2.5 H13.5 V9.5 M12.5 12.5 H2.5 V5.5" fill="none" stroke="#4a4a4a" stroke-width="1.2"/><path d="M0.8 7 L2.5 5 L4.2 7 M11.8 8 L13.5 10 L15.2 8" fill="none" stroke="#4a4a4a" stroke-width="1.1"/></svg>
<span class="t" id="t79" style="top:1637.3px;font-size:10.8px;line-height:15px;color:#333;letter-spacing:0.003px;left:1013.0px;">转换</span>
<svg class="a" style="left:1038.4px;top:1642.5px;" width="6.2" height="4.8100000000000005" viewBox="0 0 6.2 4.8100000000000005"><path d="M1 1 L3.10 2.91 L5.2 1" fill="none" stroke="#444" stroke-width="1.5" stroke-linecap="round" stroke-linejoin="round"/></svg>
<span class="t" id="t80" style="top:1658.0px;font-size:15.5px;line-height:22px;color:#444;left:624.3px;width:600px;text-align:center;">¥</span>
<svg class="a" style="left:935.7px;top:1667.3px;" width="6.2" height="4.8100000000000005" viewBox="0 0 6.2 4.8100000000000005"><path d="M1 1 L3.10 2.91 L5.2 1" fill="none" stroke="#444" stroke-width="1.5" stroke-linecap="round" stroke-linejoin="round"/></svg>
<span class="t" id="t81" style="top:1660.0px;font-size:13px;line-height:18px;color:#444;left:663.3px;width:600px;text-align:center;">%</span>
<span class="t" id="t82" style="top:1661.0px;font-size:7.5px;line-height:10px;color:#333;left:688.7px;width:600px;text-align:center;">000</span>
<span class="t" id="t83" style="top:1665.0px;font-size:10px;line-height:14px;color:#333;font-weight:700;left:688.7px;width:600px;text-align:center;">,</span>
<span class="t" id="t84" style="top:1661.4px;font-size:7.5px;line-height:10px;color:#333;font-weight:700;left:714.7px;width:600px;text-align:center;">←.0</span>
<span class="t" id="t85" style="top:1667.5px;font-size:7.5px;line-height:10px;color:#333;font-weight:700;left:714.7px;width:600px;text-align:center;">.00</span>
<span class="t" id="t86" style="top:1660.8px;font-size:7.5px;line-height:10px;color:#333;font-weight:700;left:740.2px;width:600px;text-align:center;">.00</span>
<span class="t" id="t87" style="top:1668.1px;font-size:7.5px;line-height:10px;color:#333;font-weight:700;left:740.2px;width:600px;text-align:center;">→.0</span>
<svg class="a" style="left:1049.0px;top:1683.0px;" width="6" height="6" viewBox="0 0 6 6"><path d="M1 1 L5 5 M5 1.8 V5 H1.8" fill="none" stroke="#888" stroke-width="1"/></svg>
<div class="a" style="left:1057.5px;top:1628.0px;width:1.0px;height:59.0px;background:#e4e4e4;"></div>
<svg class="a" style="left:1068.0px;top:1637.0px;" width="15" height="15" viewBox="0 0 15 15"><rect x="1" y="1" width="4.5" height="4.5" fill="none" stroke="#2e9a6e" stroke-width="1.1"/><rect x="8" y="1" width="6" height="4.5" fill="none" stroke="#4a4a4a" stroke-width="1.1"/><rect x="1" y="8" width="4.5" height="6" fill="none" stroke="#4a4a4a" stroke-width="1.1"/></svg>
<span class="t" id="t88" style="top:1637.3px;font-size:10.8px;line-height:15px;color:#333;letter-spacing:-0.030px;left:1087.7px;">行和列</span>
<svg class="a" style="left:1123.9px;top:1642.5px;" width="6.2" height="4.8100000000000005" viewBox="0 0 6.2 4.8100000000000005"><path d="M1 1 L3.10 2.91 L5.2 1" fill="none" stroke="#444" stroke-width="1.5" stroke-linecap="round" stroke-linejoin="round"/></svg>
<svg class="a" style="left:1068.0px;top:1662.0px;" width="15" height="15" viewBox="0 0 15 15"><rect x="1" y="1" width="13" height="10.5" rx="1" fill="none" stroke="#4a4a4a" stroke-width="1.1"/><path d="M1 4.5 H14 M5.5 1 V11.5" stroke="#4a4a4a" stroke-width="1.1"/><rect x="2" y="11.5" width="6" height="2.5" rx="1" fill="#fff" stroke="#2e9a6e" stroke-width="1.1"/></svg>
<span class="t" id="t89" style="top:1662.1px;font-size:10.8px;line-height:15px;color:#333;letter-spacing:-0.030px;left:1087.7px;">工作表</span>
<svg class="a" style="left:1123.9px;top:1667.3px;" width="6.2" height="4.8100000000000005" viewBox="0 0 6.2 4.8100000000000005"><path d="M1 1 L3.10 2.91 L5.2 1" fill="none" stroke="#444" stroke-width="1.5" stroke-linecap="round" stroke-linejoin="round"/></svg>
<div class="a" style="left:1142.3px;top:1628.0px;width:1.0px;height:59.0px;background:#e4e4e4;"></div>
<svg class="a" style="left:1170.0px;top:1636.0px;" width="20" height="18" viewBox="0 0 20 18"><path d="M4 1 H1 V17 H4 M16 1 H19 V17 H16 M6 1 H14 M6 17 H14 M1 9 H19 M8 5 H13 V13 H8Z" fill="none" stroke="#4a4a4a" stroke-width="1.1"/></svg>
<span class="t" id="t90" style="top:1662.1px;font-size:10.8px;line-height:15px;color:#333;letter-spacing:0.228px;left:1153.7px;">条件格式</span>
<svg class="a" style="left:1199.3px;top:1667.3px;" width="6.2" height="4.8100000000000005" viewBox="0 0 6.2 4.8100000000000005"><path d="M1 1 L3.10 2.91 L5.2 1" fill="none" stroke="#444" stroke-width="1.5" stroke-linecap="round" stroke-linejoin="round"/></svg>
<svg class="a" style="left:1216.0px;top:1637.0px;" width="16" height="15" viewBox="0 0 16 15"><path d="M1 1 H10 V4 M1 1 V10 H4 M1 5.5 H8 M5.5 1 V8" fill="none" stroke="#4a4a4a" stroke-width="1.1"/><path d="M14.5 3 L7 10.5 L5.5 13.5 L8.5 12 L15.5 4.5" fill="none" stroke="#d0802a" stroke-width="1.2"/></svg>
<svg class="a" style="left:1234.9px;top:1642.5px;" width="6.2" height="4.8100000000000005" viewBox="0 0 6.2 4.8100000000000005"><path d="M1 1 L3.10 2.91 L5.2 1" fill="none" stroke="#444" stroke-width="1.5" stroke-linecap="round" stroke-linejoin="round"/></svg>
<svg class="a" style="left:1216.0px;top:1662.0px;" width="15" height="15" viewBox="0 0 15 15"><path d="M3.5 0.5 V14.5 M11.5 0.5 V14.5 M0.5 3.5 H14.5 M0.5 11.5 H14.5" fill="none" stroke="#4a4a4a" stroke-width="1.2"/></svg>
<svg class="a" style="left:1234.9px;top:1667.3px;" width="6.2" height="4.8100000000000005" viewBox="0 0 6.2 4.8100000000000005"><path d="M1 1 L3.10 2.91 L5.2 1" fill="none" stroke="#444" stroke-width="1.5" stroke-linecap="round" stroke-linejoin="round"/></svg>
<div class="a" style="left:1253.0px;top:1628.0px;width:1.0px;height:59.0px;background:#e4e4e4;"></div>
<svg class="a" style="left:1265.0px;top:1637.0px;" width="15" height="15" viewBox="0 0 15 15"><rect x="1" y="1" width="13" height="13" rx="1.5" fill="none" stroke="#4a4a4a" stroke-width="1.1"/><path d="M1 4.5 H14 M7.5 6 V11.5 M5 9.5 L7.5 12 L10 9.5" fill="none" stroke="#4a4a4a" stroke-width="1.1"/></svg>
<span class="t" id="t91" style="top:1637.3px;font-size:10.8px;line-height:15px;color:#333;letter-spacing:0.003px;left:1284.0px;">填充</span>
<svg class="a" style="left:1309.4px;top:1642.5px;" width="6.2" height="4.8100000000000005" viewBox="0 0 6.2 4.8100000000000005"><path d="M1 1 L3.10 2.91 L5.2 1" fill="none" stroke="#444" stroke-width="1.5" stroke-linecap="round" stroke-linejoin="round"/></svg>
<svg class="a" style="left:1326.0px;top:1637.0px;" width="16" height="15" viewBox="0 0 16 15"><path d="M1 14 L4.5 1.5 H5.5 L8.5 14 M2.3 10 H7.2" fill="none" stroke="#4a4a4a" stroke-width="1.1"/><path d="M12.5 1 V13.5 M10 11 L12.5 13.5 L15 11" fill="none" stroke="#3c66b5" stroke-width="1.1"/></svg>
<span class="t" id="t92" style="top:1637.3px;font-size:10.8px;line-height:15px;color:#333;letter-spacing:-0.147px;left:1346.0px;">排序</span>
<svg class="a" style="left:1370.9px;top:1642.5px;" width="6.2" height="4.8100000000000005" viewBox="0 0 6.2 4.8100000000000005"><path d="M1 1 L3.10 2.91 L5.2 1" fill="none" stroke="#444" stroke-width="1.5" stroke-linecap="round" stroke-linejoin="round"/></svg>
<svg class="a" style="left:1388.0px;top:1637.0px;" width="16" height="15" viewBox="0 0 16 15"><rect x="1" y="1" width="14" height="13" rx="1" fill="none" stroke="#4a4a4a" stroke-width="1.1"/><path d="M5.5 1 V14 M1 5.5 H15" stroke="#2e9a6e" stroke-width="1.3"/><path d="M10.5 5.5 V14 M5.5 10 H15" stroke="#4a4a4a" stroke-width="1"/></svg>
<span class="t" id="t93" style="top:1637.3px;font-size:10.8px;line-height:15px;color:#333;letter-spacing:-0.297px;left:1408.0px;">冻结</span>
<svg class="a" style="left:1432.9px;top:1642.5px;" width="6.2" height="4.8100000000000005" viewBox="0 0 6.2 4.8100000000000005"><path d="M1 1 L3.10 2.91 L5.2 1" fill="none" stroke="#444" stroke-width="1.5" stroke-linecap="round" stroke-linejoin="round"/></svg>
<svg class="a" style="left:1266.0px;top:1662.0px;" width="13" height="15" viewBox="0 0 13 15"><path d="M11.5 3.5 V1.5 H1.5 L7 7.5 L1.5 13.5 H11.5 V11.5" fill="none" stroke="#4a4a4a" stroke-width="1.1" stroke-linejoin="round"/></svg>
<span class="t" id="t94" style="top:1662.1px;font-size:10.8px;line-height:15px;color:#333;letter-spacing:0.003px;left:1284.0px;">求和</span>
<svg class="a" style="left:1309.4px;top:1667.3px;" width="6.2" height="4.8100000000000005" viewBox="0 0 6.2 4.8100000000000005"><path d="M1 1 L3.10 2.91 L5.2 1" fill="none" stroke="#444" stroke-width="1.5" stroke-linecap="round" stroke-linejoin="round"/></svg>
<div class="a" style="left:1322.7px;top:1658.3px;width:59.3px;height:21.7px;background:#fafafa;border:1px solid #e0e0e0;box-sizing:border-box;border-radius:4px;"></div>
<div class="a" style="left:1322.7px;top:1658.3px;width:45.8px;height:21.7px;background:#e6e6e6;border-radius:4px 0 0 4px;"></div>
<svg class="a" style="left:1327.0px;top:1662.0px;" width="14" height="15" viewBox="0 0 14 15"><path d="M1 1.5 H13 L8.5 7.5 V13 L5.5 14 V7.5Z" fill="none" stroke="#4a4a4a" stroke-width="1.1" stroke-linejoin="round"/></svg>
<span class="t" id="t95" style="top:1662.1px;font-size:10.8px;line-height:15px;color:#333;letter-spacing:-0.147px;left:1346.0px;">筛选</span>
<svg class="a" style="left:1370.9px;top:1667.3px;" width="6.2" height="4.8100000000000005" viewBox="0 0 6.2 4.8100000000000005"><path d="M1 1 L3.10 2.91 L5.2 1" fill="none" stroke="#444" stroke-width="1.5" stroke-linecap="round" stroke-linejoin="round"/></svg>
<svg class="a" style="left:1388.0px;top:1662.0px;" width="15" height="15" viewBox="0 0 15 15"><circle cx="6" cy="6" r="4.8" fill="none" stroke="#4a4a4a" stroke-width="1.1"/><path d="M9.5 9.5 L14 14" stroke="#4a4a4a" stroke-width="1.1"/></svg>
<span class="t" id="t96" style="top:1662.1px;font-size:10.8px;line-height:15px;color:#333;letter-spacing:-0.297px;left:1408.0px;">查找</span>
<svg class="a" style="left:1432.9px;top:1667.3px;" width="6.2" height="4.8100000000000005" viewBox="0 0 6.2 4.8100000000000005"><path d="M1 1 L3.10 2.91 L5.2 1" fill="none" stroke="#444" stroke-width="1.5" stroke-linecap="round" stroke-linejoin="round"/></svg>
<div class="a" style="left:1452.0px;top:1628.0px;width:1.0px;height:59.0px;background:#e4e4e4;"></div>
<svg class="a" style="left:1490.0px;top:1638.0px;" width="20" height="16" viewBox="0 0 18 14"><path d="M5 12.5 Q1 12.5 1.5 8.5 Q2 6 5 6 Q6.5 2 10.5 3.5 Q13 4.5 13 7.5 Q16.5 8 16.5 10.5 Q16 12.5 13.5 12.5Z" fill="none" stroke="#2f8fe0" stroke-width="1.4"/><path d="M9 9 Q11 7 13 9 Q11 12 9 9Z" fill="none" stroke="#e0503a" stroke-width="1.1"/></svg>
<span class="t" id="t97" style="top:1662.9px;font-size:10.8px;line-height:15px;color:#333;letter-spacing:0.160px;left:1462.3px;">保存到天翼云盘</span>
<div class="a" style="left:11.5px;top:1698.0px;width:145.7px;height:23.3px;background:#fff;border-radius:5px;"></div>
<span class="t" id="t98" style="top:1702.5px;font-size:10.5px;line-height:15px;color:#555;font-family:'Liberation Mono','Noto Sans CJK SC',monospace;left:-224.8px;width:600px;text-align:center;">E25</span>
<svg class="a" style="left:143.4px;top:1707.8px;" width="8" height="5.800000000000001" viewBox="0 0 8 5.800000000000001"><path d="M1 1 L4.00 3.90 L7 1" fill="none" stroke="#555" stroke-width="1.2" stroke-linecap="round" stroke-linejoin="round"/></svg>
<div class="a" style="left:167.0px;top:1698.0px;width:1682.0px;height:23.3px;background:#fff;border-radius:5px;"></div>
<svg class="a" style="left:188.0px;top:1703.0px;" width="13" height="13" viewBox="0 0 13 13"><circle cx="5.5" cy="5.5" r="4.4" fill="none" stroke="#555" stroke-width="1.1"/><path d="M3.3 5.5 H7.7 M8.7 8.7 L12.3 12.3" stroke="#555" stroke-width="1.1"/></svg>
<span class="t" id="t99" style="top:1700.5px;font-size:13px;line-height:18px;color:#333;font-weight:700;left:216.0px;font-style:italic;font-family:'Liberation Serif',serif;">fx</span>
<div class="a" style="left:240.7px;top:1703.0px;width:1.0px;height:13.0px;background:#d8d8d8;"></div>
<div class="a" style="left:0.0px;top:1727.6px;width:1860.0px;height:787.9px;background:#fff;"></div>
<div class="a" style="left:0.0px;top:1727.6px;width:1860.0px;height:20.8px;background:#ececec;"></div>
<div class="a" style="left:0.0px;top:1748.4px;width:30.9px;height:767.1px;background:#f1f1f1;"></div>
<div class="a" style="left:484.7px;top:1727.6px;width:37.8px;height:20.8px;background:#e2e2e2;"></div>
<div class="a" style="left:484.7px;top:1746.8px;width:37.8px;height:1.8px;background:#1e8f63;"></div>
<svg class="a" style="left:11.0px;top:1735.0px;" width="8" height="8" viewBox="0 0 8 8"><path d="M7 1 V7 H1Z" fill="#777"/></svg>
<span class="t" id="t100" style="top:1728.8px;font-size:13px;line-height:18px;color:#555;left:-236.5px;width:600px;text-align:center;">A</span>
<span class="t" id="t101" style="top:1728.8px;font-size:13px;line-height:18px;color:#555;left:-160.8px;width:600px;text-align:center;">B</span>
<span class="t" id="t102" style="top:1728.8px;font-size:13px;line-height:18px;color:#555;left:-4.1px;width:600px;text-align:center;">C</span>
<span class="t" id="t103" style="top:1728.8px;font-size:13px;line-height:18px;color:#555;left:147.1px;width:600px;text-align:center;">D</span>
<span class="t" id="t104" style="top:1728.8px;font-size:13px;line-height:18px;color:#1e7d57;left:203.6px;width:600px;text-align:center;">E</span>
<span class="t" id="t105" style="top:1728.8px;font-size:13px;line-height:18px;color:#555;left:263.5px;width:600px;text-align:center;">F</span>
<span class="t" id="t106" style="top:1728.8px;font-size:13px;line-height:18px;color:#555;left:337.0px;width:600px;text-align:center;">G</span>
<span class="t" id="t107" style="top:1728.8px;font-size:13px;line-height:18px;color:#555;left:401.6px;width:600px;text-align:center;">H</span>
<span class="t" id="t108" style="top:1728.8px;font-size:13px;line-height:18px;color:#555;left:459.6px;width:600px;text-align:center;">I</span>
<span class="t" id="t109" style="top:1728.8px;font-size:13px;line-height:18px;color:#555;left:511.1px;width:600px;text-align:center;">J</span>
<span class="t" id="t110" style="top:1728.8px;font-size:13px;line-height:18px;color:#555;left:561.8px;width:600px;text-align:center;">K</span>
<span class="t" id="t111" style="top:1728.8px;font-size:13px;line-height:18px;color:#555;left:607.5px;width:600px;text-align:center;">L</span>
<span class="t" id="t112" style="top:1728.8px;font-size:13px;line-height:18px;color:#555;left:660.8px;width:600px;text-align:center;">M</span>
<span class="t" id="t113" style="top:1728.8px;font-size:13px;line-height:18px;color:#555;left:725.5px;width:600px;text-align:center;">N</span>
<span class="t" id="t114" style="top:1728.8px;font-size:13px;line-height:18px;color:#555;left:790.2px;width:600px;text-align:center;">O</span>
<span class="t" id="t115" style="top:1728.8px;font-size:13px;line-height:18px;color:#555;left:854.9px;width:600px;text-align:center;">P</span>
<span class="t" id="t116" style="top:1728.8px;font-size:13px;line-height:18px;color:#555;left:919.6px;width:600px;text-align:center;">Q</span>
<span class="t" id="t117" style="top:1728.8px;font-size:13px;line-height:18px;color:#555;left:984.2px;width:600px;text-align:center;">R</span>
<span class="t" id="t118" style="top:1728.8px;font-size:13px;line-height:18px;color:#555;left:1048.9px;width:600px;text-align:center;">S</span>
<span class="t" id="t119" style="top:1728.8px;font-size:13px;line-height:18px;color:#555;left:1113.6px;width:600px;text-align:center;">T</span>
<span class="t" id="t120" style="top:1728.8px;font-size:13px;line-height:18px;color:#555;left:1178.3px;width:600px;text-align:center;">U</span>
<span class="t" id="t121" style="top:1728.8px;font-size:13px;line-height:18px;color:#555;left:1243.0px;width:600px;text-align:center;">V</span>
<span class="t" id="t122" style="top:1728.8px;font-size:13px;line-height:18px;color:#555;left:1307.6px;width:600px;text-align:center;">W</span>
<span class="t" id="t123" style="top:1728.8px;font-size:13px;line-height:18px;color:#555;left:1372.3px;width:600px;text-align:center;">X</span>
<span class="t" id="t124" style="top:1728.8px;font-size:13px;line-height:18px;color:#555;left:1437.0px;width:600px;text-align:center;">Y</span>
<span class="t" id="t125" style="top:1728.8px;font-size:13px;line-height:18px;color:#555;left:1501.7px;width:600px;text-align:center;">Z</span>
<div class="a" style="left:95.6px;top:1748.4px;width:1.0px;height:767.1px;background:#eaeaea;"></div>
<div class="a" style="left:95.6px;top:1730.6px;width:1.0px;height:17.8px;background:#dcdcdc;"></div>
<div class="a" style="left:181.8px;top:1748.4px;width:1.0px;height:767.1px;background:#eaeaea;"></div>
<div class="a" style="left:181.8px;top:1730.6px;width:1.0px;height:17.8px;background:#dcdcdc;"></div>
<div class="a" style="left:409.0px;top:1748.4px;width:1.0px;height:767.1px;background:#eaeaea;"></div>
<div class="a" style="left:409.0px;top:1730.6px;width:1.0px;height:17.8px;background:#dcdcdc;"></div>
<div class="a" style="left:484.2px;top:1748.4px;width:1.0px;height:767.1px;background:#eaeaea;"></div>
<div class="a" style="left:484.2px;top:1730.6px;width:1.0px;height:17.8px;background:#dcdcdc;"></div>
<div class="a" style="left:522.0px;top:1748.4px;width:1.0px;height:767.1px;background:#eaeaea;"></div>
<div class="a" style="left:522.0px;top:1730.6px;width:1.0px;height:17.8px;background:#dcdcdc;"></div>
<div class="a" style="left:604.1px;top:1748.4px;width:1.0px;height:767.1px;background:#eaeaea;"></div>
<div class="a" style="left:604.1px;top:1730.6px;width:1.0px;height:17.8px;background:#dcdcdc;"></div>
<div class="a" style="left:668.8px;top:1748.4px;width:1.0px;height:767.1px;background:#eaeaea;"></div>
<div class="a" style="left:668.8px;top:1730.6px;width:1.0px;height:17.8px;background:#dcdcdc;"></div>
<div class="a" style="left:733.5px;top:1748.4px;width:1.0px;height:767.1px;background:#eaeaea;"></div>
<div class="a" style="left:733.5px;top:1730.6px;width:1.0px;height:17.8px;background:#dcdcdc;"></div>
<div class="a" style="left:784.7px;top:1748.4px;width:1.0px;height:767.1px;background:#eaeaea;"></div>
<div class="a" style="left:784.7px;top:1730.6px;width:1.0px;height:17.8px;background:#dcdcdc;"></div>
<div class="a" style="left:836.5px;top:1748.4px;width:1.0px;height:767.1px;background:#eaeaea;"></div>
<div class="a" style="left:836.5px;top:1730.6px;width:1.0px;height:17.8px;background:#dcdcdc;"></div>
<div class="a" style="left:886.1px;top:1748.4px;width:1.0px;height:767.1px;background:#eaeaea;"></div>
<div class="a" style="left:886.1px;top:1730.6px;width:1.0px;height:17.8px;background:#dcdcdc;"></div>
<div class="a" style="left:928.0px;top:1748.4px;width:1.0px;height:767.1px;background:#eaeaea;"></div>
<div class="a" style="left:928.0px;top:1730.6px;width:1.0px;height:17.8px;background:#dcdcdc;"></div>
<div class="a" style="left:992.7px;top:1748.4px;width:1.0px;height:767.1px;background:#eaeaea;"></div>
<div class="a" style="left:992.7px;top:1730.6px;width:1.0px;height:17.8px;background:#dcdcdc;"></div>
<div class="a" style="left:1057.4px;top:1748.4px;width:1.0px;height:767.1px;background:#eaeaea;"></div>
<div class="a" style="left:1057.4px;top:1730.6px;width:1.0px;height:17.8px;background:#dcdcdc;"></div>
<div class="a" style="left:1122.0px;top:1748.4px;width:1.0px;height:767.1px;background:#eaeaea;"></div>
<div class="a" style="left:1122.0px;top:1730.6px;width:1.0px;height:17.8px;background:#dcdcdc;"></div>
<div class="a" style="left:1186.7px;top:1748.4px;width:1.0px;height:767.1px;background:#eaeaea;"></div>
<div class="a" style="left:1186.7px;top:1730.6px;width:1.0px;height:17.8px;background:#dcdcdc;"></div>
<div class="a" style="left:1251.4px;top:1748.4px;width:1.0px;height:767.1px;background:#eaeaea;"></div>
<div class="a" style="left:1251.4px;top:1730.6px;width:1.0px;height:17.8px;background:#dcdcdc;"></div>
<div class="a" style="left:1316.1px;top:1748.4px;width:1.0px;height:767.1px;background:#eaeaea;"></div>
<div class="a" style="left:1316.1px;top:1730.6px;width:1.0px;height:17.8px;background:#dcdcdc;"></div>
<div class="a" style="left:1380.8px;top:1748.4px;width:1.0px;height:767.1px;background:#eaeaea;"></div>
<div class="a" style="left:1380.8px;top:1730.6px;width:1.0px;height:17.8px;background:#dcdcdc;"></div>
<div class="a" style="left:1445.4px;top:1748.4px;width:1.0px;height:767.1px;background:#eaeaea;"></div>
<div class="a" style="left:1445.4px;top:1730.6px;width:1.0px;height:17.8px;background:#dcdcdc;"></div>
<div class="a" style="left:1510.1px;top:1748.4px;width:1.0px;height:767.1px;background:#eaeaea;"></div>
<div class="a" style="left:1510.1px;top:1730.6px;width:1.0px;height:17.8px;background:#dcdcdc;"></div>
<div class="a" style="left:1574.8px;top:1748.4px;width:1.0px;height:767.1px;background:#eaeaea;"></div>
<div class="a" style="left:1574.8px;top:1730.6px;width:1.0px;height:17.8px;background:#dcdcdc;"></div>
<div class="a" style="left:1639.5px;top:1748.4px;width:1.0px;height:767.1px;background:#eaeaea;"></div>
<div class="a" style="left:1639.5px;top:1730.6px;width:1.0px;height:17.8px;background:#dcdcdc;"></div>
<div class="a" style="left:1704.2px;top:1748.4px;width:1.0px;height:767.1px;background:#eaeaea;"></div>
<div class="a" style="left:1704.2px;top:1730.6px;width:1.0px;height:17.8px;background:#dcdcdc;"></div>
<div class="a" style="left:1768.8px;top:1748.4px;width:1.0px;height:767.1px;background:#eaeaea;"></div>
<div class="a" style="left:1768.8px;top:1730.6px;width:1.0px;height:17.8px;background:#dcdcdc;"></div>
<div class="a" style="left:1833.5px;top:1748.4px;width:1.0px;height:767.1px;background:#eaeaea;"></div>
<div class="a" style="left:1833.5px;top:1730.6px;width:1.0px;height:17.8px;background:#dcdcdc;"></div>
<div class="a" style="left:30.4px;top:1727.6px;width:1.0px;height:787.9px;background:#d8d8d8;"></div>
<div class="a" style="left:0.0px;top:1774.5px;width:1845.0px;height:1.0px;background:#eaeaea;"></div>
<div class="a" style="left:0.0px;top:1800.7px;width:1845.0px;height:1.0px;background:#eaeaea;"></div>
<div class="a" style="left:0.0px;top:1826.8px;width:1845.0px;height:1.0px;background:#eaeaea;"></div>
<div class="a" style="left:0.0px;top:1853.0px;width:1845.0px;height:1.0px;background:#eaeaea;"></div>
<div class="a" style="left:0.0px;top:1879.1px;width:1845.0px;height:1.0px;background:#eaeaea;"></div>
<div class="a" style="left:0.0px;top:1905.3px;width:1845.0px;height:1.0px;background:#eaeaea;"></div>
<div class="a" style="left:0.0px;top:1931.4px;width:1845.0px;height:1.0px;background:#eaeaea;"></div>
<div class="a" style="left:0.0px;top:1957.6px;width:1845.0px;height:1.0px;background:#eaeaea;"></div>
<div class="a" style="left:0.0px;top:1983.7px;width:1845.0px;height:1.0px;background:#eaeaea;"></div>
<div class="a" style="left:0.0px;top:2009.9px;width:1845.0px;height:1.0px;background:#eaeaea;"></div>
<div class="a" style="left:0.0px;top:2036.0px;width:1845.0px;height:1.0px;background:#eaeaea;"></div>
<div class="a" style="left:0.0px;top:2062.2px;width:1845.0px;height:1.0px;background:#eaeaea;"></div>
<div class="a" style="left:0.0px;top:2088.3px;width:1845.0px;height:1.0px;background:#eaeaea;"></div>
<div class="a" style="left:0.0px;top:2114.5px;width:1845.0px;height:1.0px;background:#eaeaea;"></div>
<div class="a" style="left:0.0px;top:2140.6px;width:1845.0px;height:1.0px;background:#eaeaea;"></div>
<div class="a" style="left:0.0px;top:2166.8px;width:1845.0px;height:1.0px;background:#eaeaea;"></div>
<div class="a" style="left:0.0px;top:2192.9px;width:1845.0px;height:1.0px;background:#eaeaea;"></div>
<div class="a" style="left:0.0px;top:2219.1px;width:1845.0px;height:1.0px;background:#eaeaea;"></div>
<div class="a" style="left:0.0px;top:2245.2px;width:1845.0px;height:1.0px;background:#eaeaea;"></div>
<div class="a" style="left:0.0px;top:2271.4px;width:1845.0px;height:1.0px;background:#eaeaea;"></div>
<div class="a" style="left:0.0px;top:2297.5px;width:1845.0px;height:1.0px;background:#eaeaea;"></div>
<div class="a" style="left:0.0px;top:2323.7px;width:1845.0px;height:1.0px;background:#eaeaea;"></div>
<div class="a" style="left:0.0px;top:2349.8px;width:1845.0px;height:1.0px;background:#eaeaea;"></div>
<div class="a" style="left:0.0px;top:2376.0px;width:1845.0px;height:1.0px;background:#eaeaea;"></div>
<div class="a" style="left:0.0px;top:2402.1px;width:1845.0px;height:1.0px;background:#eaeaea;"></div>
<div class="a" style="left:0.0px;top:2428.3px;width:1845.0px;height:1.0px;background:#eaeaea;"></div>
<div class="a" style="left:0.0px;top:2454.4px;width:1845.0px;height:1.0px;background:#eaeaea;"></div>
<div class="a" style="left:0.0px;top:2480.6px;width:1845.0px;height:1.0px;background:#eaeaea;"></div>
<div class="a" style="left:0.0px;top:2506.7px;width:1845.0px;height:1.0px;background:#eaeaea;"></div>
<div class="a" style="left:0.0px;top:1774.4px;width:1845.0px;height:1.8px;background:#c4c4c4;"></div>
<div class="a" style="left:95.4px;top:1748.4px;width:1.6px;height:767.1px;background:#222;"></div>
<div class="a" style="left:927.7px;top:1748.4px;width:1.6px;height:767.1px;background:#222;"></div>
<span class="t" id="t126" style="top:1753.0px;font-size:12.8px;line-height:18px;color:#555;left:-284.5px;width:600px;text-align:center;">1</span>
<span class="t" id="t127" style="top:1779.4px;font-size:12.8px;line-height:18px;color:#555;letter-spacing:0.733px;left:-284.5px;width:600px;text-align:center;text-indent:0.733px;">20</span>
<span class="t" id="t128" style="top:1805.5px;font-size:12.8px;line-height:18px;color:#555;letter-spacing:0.733px;left:-284.5px;width:600px;text-align:center;text-indent:0.733px;">21</span>
<span class="t" id="t129" style="top:1831.7px;font-size:12.8px;line-height:18px;color:#555;letter-spacing:0.733px;left:-284.5px;width:600px;text-align:center;text-indent:0.733px;">22</span>
<span class="t" id="t130" style="top:1857.8px;font-size:12.8px;line-height:18px;color:#555;letter-spacing:0.733px;left:-284.5px;width:600px;text-align:center;text-indent:0.733px;">23</span>
<span class="t" id="t131" style="top:1884.0px;font-size:12.8px;line-height:18px;color:#555;letter-spacing:0.733px;left:-284.5px;width:600px;text-align:center;text-indent:0.733px;">24</span>
<div class="a" style="left:0.0px;top:1905.8px;width:30.4px;height:26.1px;background:#e2e2e2;"></div>
<div class="a" style="left:29.2px;top:1905.8px;width:1.8px;height:26.1px;background:#1e8f63;"></div>
<span class="t" id="t132" style="top:1910.1px;font-size:12.8px;line-height:18px;color:#1e7d57;letter-spacing:0.733px;left:-284.5px;width:600px;text-align:center;text-indent:0.733px;">25</span>
<span class="t" id="t133" style="top:1936.3px;font-size:12.8px;line-height:18px;color:#555;letter-spacing:0.733px;left:-284.5px;width:600px;text-align:center;text-indent:0.733px;">26</span>
<span class="t" id="t134" style="top:1962.4px;font-size:12.8px;line-height:18px;color:#555;letter-spacing:0.733px;left:-284.5px;width:600px;text-align:center;text-indent:0.733px;">27</span>
<span class="t" id="t135" style="top:1988.6px;font-size:12.8px;line-height:18px;color:#555;letter-spacing:0.733px;left:-284.5px;width:600px;text-align:center;text-indent:0.733px;">28</span>
<span class="t" id="t136" style="top:2014.7px;font-size:12.8px;line-height:18px;color:#555;letter-spacing:0.733px;left:-284.5px;width:600px;text-align:center;text-indent:0.733px;">29</span>
<span class="t" id="t137" style="top:2040.9px;font-size:12.8px;line-height:18px;color:#555;letter-spacing:0.733px;left:-284.5px;width:600px;text-align:center;text-indent:0.733px;">30</span>
<span class="t" id="t138" style="top:2067.0px;font-size:12.8px;line-height:18px;color:#555;letter-spacing:0.733px;left:-284.5px;width:600px;text-align:center;text-indent:0.733px;">31</span>
<span class="t" id="t139" style="top:2093.2px;font-size:12.8px;line-height:18px;color:#555;letter-spacing:0.733px;left:-284.5px;width:600px;text-align:center;text-indent:0.733px;">32</span>
<span class="t" id="t140" style="top:2119.3px;font-size:12.8px;line-height:18px;color:#555;letter-spacing:0.733px;left:-284.5px;width:600px;text-align:center;text-indent:0.733px;">33</span>
<span class="t" id="t141" style="top:2145.5px;font-size:12.8px;line-height:18px;color:#555;letter-spacing:0.733px;left:-284.5px;width:600px;text-align:center;text-indent:0.733px;">34</span>
<span class="t" id="t142" style="top:2171.6px;font-size:12.8px;line-height:18px;color:#555;letter-spacing:0.733px;left:-284.5px;width:600px;text-align:center;text-indent:0.733px;">35</span>
<span class="t" id="t143" style="top:2197.8px;font-size:12.8px;line-height:18px;color:#555;letter-spacing:0.733px;left:-284.5px;width:600px;text-align:center;text-indent:0.733px;">36</span>
<span class="t" id="t144" style="top:2223.9px;font-size:12.8px;line-height:18px;color:#555;letter-spacing:0.733px;left:-284.5px;width:600px;text-align:center;text-indent:0.733px;">37</span>
<span class="t" id="t145" style="top:2250.1px;font-size:12.8px;line-height:18px;color:#555;letter-spacing:0.733px;left:-284.5px;width:600px;text-align:center;text-indent:0.733px;">38</span>
<span class="t" id="t146" style="top:2276.2px;font-size:12.8px;line-height:18px;color:#555;letter-spacing:0.733px;left:-284.5px;width:600px;text-align:center;text-indent:0.733px;">39</span>
<span class="t" id="t147" style="top:2302.4px;font-size:12.8px;line-height:18px;color:#555;letter-spacing:0.733px;left:-284.5px;width:600px;text-align:center;text-indent:0.733px;">40</span>
<span class="t" id="t148" style="top:2328.5px;font-size:12.8px;line-height:18px;color:#555;letter-spacing:0.733px;left:-284.5px;width:600px;text-align:center;text-indent:0.733px;">41</span>
<span class="t" id="t149" style="top:2354.7px;font-size:12.8px;line-height:18px;color:#555;letter-spacing:0.733px;left:-284.5px;width:600px;text-align:center;text-indent:0.733px;">42</span>
<span class="t" id="t150" style="top:2380.8px;font-size:12.8px;line-height:18px;color:#555;letter-spacing:0.733px;left:-284.5px;width:600px;text-align:center;text-indent:0.733px;">43</span>
<span class="t" id="t151" style="top:2407.0px;font-size:12.8px;line-height:18px;color:#555;letter-spacing:0.733px;left:-284.5px;width:600px;text-align:center;text-indent:0.733px;">44</span>
<span class="t" id="t152" style="top:2433.1px;font-size:12.8px;line-height:18px;color:#555;letter-spacing:0.733px;left:-284.5px;width:600px;text-align:center;text-indent:0.733px;">45</span>
<span class="t" id="t153" style="top:2459.3px;font-size:12.8px;line-height:18px;color:#555;letter-spacing:0.733px;left:-284.5px;width:600px;text-align:center;text-indent:0.733px;">46</span>
<span class="t" id="t154" style="top:2485.4px;font-size:12.8px;line-height:18px;color:#555;letter-spacing:0.733px;left:-284.5px;width:600px;text-align:center;text-indent:0.733px;">47</span>
<span class="t" id="t155" style="top:1753.0px;font-size:12.8px;line-height:18px;color:#222;letter-spacing:-0.157px;left:-237.5px;width:600px;text-align:center;text-indent:-0.157px;">123.00</span>
<span class="t" id="t156" style="top:1753.5px;font-size:12.2px;line-height:17px;color:#222;left:-160.8px;width:600px;text-align:center;">日期</span>
<span class="t" id="t157" style="top:1753.5px;font-size:12.2px;line-height:17px;color:#222;left:-4.1px;width:600px;text-align:center;">内容</span>
<span class="t" id="t158" style="top:1753.5px;font-size:12.2px;line-height:17px;color:#222;left:147.1px;width:600px;text-align:center;">金额</span>
<span class="t" id="t159" style="top:1753.5px;font-size:12.2px;line-height:17px;color:#222;left:202.6px;width:600px;text-align:center;">成户</span>
<span class="t" id="t160" style="top:1753.0px;font-size:12.5px;line-height:18px;color:#222;font-family:'Noto Serif CJK SC',serif;left:263.5px;width:600px;text-align:center;transform:scaleX(1.2);">Ⅲ</span>
<span class="t" id="t161" style="top:1753.0px;font-size:12.5px;line-height:18px;color:#222;font-family:'Noto Serif CJK SC',serif;left:337.0px;width:600px;text-align:center;transform:scaleX(1.2);">Ⅱ</span>
<span class="t" id="t162" style="top:1753.0px;font-size:12.5px;line-height:18px;color:#222;font-family:'Noto Serif CJK SC',serif;left:401.6px;width:600px;text-align:center;transform:scaleX(1.2);">Ⅰ</span>
<span class="t" id="t163" style="top:1753.5px;font-size:12.2px;line-height:17px;color:#222;left:459.6px;width:600px;text-align:center;">年度</span>
<span class="t" id="t164" style="top:1753.5px;font-size:12.2px;line-height:17px;color:#222;left:511.1px;width:600px;text-align:center;">月度</span>
<span class="t" id="t165" style="top:1753.5px;font-size:12.2px;line-height:17px;color:#222;left:561.8px;width:600px;text-align:center;">对账</span>
<span class="t" id="t166" style="top:1753.5px;font-size:12.2px;line-height:17px;color:#222;left:606.5px;width:600px;text-align:center;">预算</span>
<span class="t" id="t167" style="top:1779.4px;font-size:12.8px;line-height:18px;color:#222;letter-spacing:0.529px;left:-160.8px;width:600px;text-align:center;text-indent:0.529px;">2017/11/20</span>
<span class="t" id="t168" style="top:1779.4px;font-size:12.8px;line-height:18px;color:#222;letter-spacing:0.462px;left:-4.1px;width:600px;text-align:center;text-indent:0.462px;">cloudlet.net</span>
<span class="t" id="t169" style="top:1779.4px;font-size:12.8px;line-height:18px;color:#222;letter-spacing:0.005px;left:146.3px;width:600px;text-align:center;text-indent:0.005px;">2000.00</span>
<span class="t" id="t170" style="top:1780.7px;font-size:12.2px;line-height:17px;color:#222;left:263.5px;width:600px;text-align:center;">域名</span>
<span class="t" id="t171" style="top:1780.7px;font-size:12.2px;line-height:17px;color:#222;left:337.0px;width:600px;text-align:center;">其他</span>
<span class="t" id="t172" style="top:1780.7px;font-size:12.2px;line-height:17px;color:#222;left:401.6px;width:600px;text-align:center;">支出</span>
<span class="t" id="t173" style="top:1779.4px;font-size:12.8px;line-height:18px;color:#222;letter-spacing:-0.717px;left:459.6px;width:600px;text-align:center;text-indent:-0.717px;">17</span>
<span class="t" id="t174" style="top:1779.4px;font-size:12.8px;line-height:18px;color:#222;letter-spacing:-0.548px;left:511.1px;width:600px;text-align:center;text-indent:-0.548px;">11</span>
<span class="t" id="t175" style="top:1805.5px;font-size:12.8px;line-height:18px;color:#222;letter-spacing:0.529px;left:-160.8px;width:600px;text-align:center;text-indent:0.529px;">2017/11/20</span>
<span class="t" id="t176" style="top:1805.5px;font-size:12.8px;line-height:18px;color:#222;letter-spacing:0.452px;left:-4.1px;width:600px;text-align:center;text-indent:0.452px;">cloudlet.org</span>
<span class="t" id="t177" style="top:1805.5px;font-size:12.8px;line-height:18px;color:#222;letter-spacing:0.005px;left:146.3px;width:600px;text-align:center;text-indent:0.005px;">2000.00</span>
<span class="t" id="t178" style="top:1806.8px;font-size:12.2px;line-height:17px;color:#222;left:263.5px;width:600px;text-align:center;">域名</span>
<span class="t" id="t179" style="top:1806.8px;font-size:12.2px;line-height:17px;color:#222;left:337.0px;width:600px;text-align:center;">其他</span>
<span class="t" id="t180" style="top:1806.8px;font-size:12.2px;line-height:17px;color:#222;left:401.6px;width:600px;text-align:center;">支出</span>
<span class="t" id="t181" style="top:1805.5px;font-size:12.8px;line-height:18px;color:#222;letter-spacing:-0.717px;left:459.6px;width:600px;text-align:center;text-indent:-0.717px;">17</span>
<span class="t" id="t182" style="top:1805.5px;font-size:12.8px;line-height:18px;color:#222;letter-spacing:-0.548px;left:511.1px;width:600px;text-align:center;text-indent:-0.548px;">11</span>
<span class="t" id="t183" style="top:1831.7px;font-size:12.8px;line-height:18px;color:#222;letter-spacing:0.529px;left:-160.8px;width:600px;text-align:center;text-indent:0.529px;">2017/11/20</span>
<span class="t" id="t184" style="top:1831.7px;font-size:12.8px;line-height:18px;color:#222;letter-spacing:0.321px;left:-4.1px;width:600px;text-align:center;text-indent:0.321px;">cloudlet.cc</span>
<span class="t" id="t185" style="top:1831.7px;font-size:12.8px;line-height:18px;color:#222;letter-spacing:0.005px;left:146.3px;width:600px;text-align:center;text-indent:0.005px;">2000.00</span>
<span class="t" id="t186" style="top:1833.0px;font-size:12.2px;line-height:17px;color:#222;left:263.5px;width:600px;text-align:center;">域名</span>
<span class="t" id="t187" style="top:1833.0px;font-size:12.2px;line-height:17px;color:#222;left:337.0px;width:600px;text-align:center;">其他</span>
<span class="t" id="t188" style="top:1833.0px;font-size:12.2px;line-height:17px;color:#222;left:401.6px;width:600px;text-align:center;">支出</span>
<span class="t" id="t189" style="top:1831.7px;font-size:12.8px;line-height:18px;color:#222;letter-spacing:-0.717px;left:459.6px;width:600px;text-align:center;text-indent:-0.717px;">17</span>
<span class="t" id="t190" style="top:1831.7px;font-size:12.8px;line-height:18px;color:#222;letter-spacing:-0.548px;left:511.1px;width:600px;text-align:center;text-indent:-0.548px;">11</span>
<span class="t" id="t191" style="top:1857.8px;font-size:12.8px;line-height:18px;color:#222;letter-spacing:0.020px;left:146.3px;width:600px;text-align:center;text-indent:0.020px;">0.00</span>
<span class="t" id="t192" style="top:1884.0px;font-size:12.8px;line-height:18px;color:#222;letter-spacing:-0.157px;left:146.3px;width:600px;text-align:center;text-indent:-0.157px;">123.00</span>
<span class="t" id="t193" style="top:2040.9px;font-size:12.8px;line-height:18px;color:#222;letter-spacing:0.396px;left:-160.8px;width:600px;text-align:center;text-indent:0.396px;">2048/1/1</span>
<span class="t" id="t194" style="top:2040.9px;font-size:12.8px;line-height:18px;color:#222;letter-spacing:0.020px;left:146.3px;width:600px;text-align:center;text-indent:0.020px;">0.00</span>
<span class="t" id="t195" style="top:2042.2px;font-size:12.2px;line-height:17px;color:#222;left:263.5px;width:600px;text-align:center;">工资</span>
<span class="t" id="t196" style="top:2040.9px;font-size:12.8px;line-height:18px;color:#222;left:337.0px;width:600px;text-align:center;">/</span>
<span class="t" id="t197" style="top:2042.2px;font-size:12.2px;line-height:17px;color:#222;left:401.6px;width:600px;text-align:center;">收入</span>
<span class="t" id="t198" style="top:2040.9px;font-size:12.8px;line-height:18px;color:#222;letter-spacing:-0.117px;left:459.6px;width:600px;text-align:center;text-indent:-0.117px;">47</span>
<span class="t" id="t199" style="top:2040.9px;font-size:12.8px;line-height:18px;color:#222;letter-spacing:-0.417px;left:511.1px;width:600px;text-align:center;text-indent:-0.417px;">13</span>
<span class="t" id="t200" style="top:2040.9px;font-size:12.8px;line-height:18px;color:#222;left:607.5px;width:600px;text-align:center;">P</span>
<span class="t" id="t201" style="top:2067.0px;font-size:12.8px;line-height:18px;color:#222;letter-spacing:0.396px;left:-160.8px;width:600px;text-align:center;text-indent:0.396px;">2048/1/1</span>
<span class="t" id="t202" style="top:2067.0px;font-size:12.8px;line-height:18px;color:#222;letter-spacing:0.020px;left:146.3px;width:600px;text-align:center;text-indent:0.020px;">0.00</span>
<span class="t" id="t203" style="top:2068.3px;font-size:12.2px;line-height:17px;color:#222;left:263.5px;width:600px;text-align:center;">现金</span>
<span class="t" id="t204" style="top:2067.0px;font-size:12.8px;line-height:18px;color:#222;left:337.0px;width:600px;text-align:center;">/</span>
<span class="t" id="t205" style="top:2068.3px;font-size:12.2px;line-height:17px;color:#222;left:401.6px;width:600px;text-align:center;">资产</span>
<span class="t" id="t206" style="top:2067.0px;font-size:12.8px;line-height:18px;color:#222;letter-spacing:-0.117px;left:459.6px;width:600px;text-align:center;text-indent:-0.117px;">47</span>
<span class="t" id="t207" style="top:2067.0px;font-size:12.8px;line-height:18px;color:#222;letter-spacing:-0.417px;left:511.1px;width:600px;text-align:center;text-indent:-0.417px;">13</span>
<span class="t" id="t208" style="top:2067.0px;font-size:12.8px;line-height:18px;color:#222;left:607.5px;width:600px;text-align:center;">P</span>
<span class="t" id="t209" style="top:2093.2px;font-size:12.8px;line-height:18px;color:#222;letter-spacing:0.521px;left:-160.8px;width:600px;text-align:center;text-indent:0.521px;">2048/1/2</span>
<span class="t" id="t210" style="top:2093.2px;font-size:12.8px;line-height:18px;color:#222;letter-spacing:0.485px;left:-4.1px;width:600px;text-align:center;text-indent:0.485px;">cloudlet.info</span>
<span class="t" id="t211" style="top:2093.2px;font-size:12.8px;line-height:18px;color:#222;letter-spacing:0.011px;left:146.3px;width:600px;text-align:center;text-indent:0.011px;">100000.00</span>
<span class="t" id="t212" style="top:2094.5px;font-size:12.2px;line-height:17px;color:#222;left:263.5px;width:600px;text-align:center;">域名</span>
<span class="t" id="t213" style="top:2094.5px;font-size:12.2px;line-height:17px;color:#222;left:337.0px;width:600px;text-align:center;">其他</span>
<span class="t" id="t214" style="top:2094.5px;font-size:12.2px;line-height:17px;color:#222;left:401.6px;width:600px;text-align:center;">支出</span>
<span class="t" id="t215" style="top:2093.2px;font-size:12.8px;line-height:18px;color:#222;letter-spacing:-0.117px;left:459.6px;width:600px;text-align:center;text-indent:-0.117px;">47</span>
<span class="t" id="t216" style="top:2093.2px;font-size:12.8px;line-height:18px;color:#222;letter-spacing:-0.417px;left:511.1px;width:600px;text-align:center;text-indent:-0.417px;">13</span>
<span class="t" id="t217" style="top:2093.2px;font-size:12.8px;line-height:18px;color:#222;left:607.5px;width:600px;text-align:center;">P</span>
<span class="t" id="t218" style="top:2119.3px;font-size:12.8px;line-height:18px;color:#222;letter-spacing:0.521px;left:-160.8px;width:600px;text-align:center;text-indent:0.521px;">2048/1/2</span>
<span class="t" id="t219" style="top:2119.3px;font-size:12.8px;line-height:18px;color:#222;letter-spacing:0.485px;left:-4.1px;width:600px;text-align:center;text-indent:0.485px;">cloudlet.info</span>
<span class="t" id="t220" style="top:2119.3px;font-size:12.8px;line-height:18px;color:#222;letter-spacing:0.103px;left:146.3px;width:600px;text-align:center;text-indent:0.103px;">-100000.00</span>
<span class="t" id="t221" style="top:2120.6px;font-size:12.2px;line-height:17px;color:#222;left:263.5px;width:600px;text-align:center;">现金</span>
<span class="t" id="t222" style="top:2119.3px;font-size:12.8px;line-height:18px;color:#222;left:337.0px;width:600px;text-align:center;">/</span>
<span class="t" id="t223" style="top:2120.6px;font-size:12.2px;line-height:17px;color:#222;left:401.6px;width:600px;text-align:center;">资产</span>
<span class="t" id="t224" style="top:2119.3px;font-size:12.8px;line-height:18px;color:#222;letter-spacing:-0.117px;left:459.6px;width:600px;text-align:center;text-indent:-0.117px;">47</span>
<span class="t" id="t225" style="top:2119.3px;font-size:12.8px;line-height:18px;color:#222;letter-spacing:-0.417px;left:511.1px;width:600px;text-align:center;text-indent:-0.417px;">13</span>
<span class="t" id="t226" style="top:2119.3px;font-size:12.8px;line-height:18px;color:#222;left:607.5px;width:600px;text-align:center;">P</span>
<div class="a" style="left:169.3px;top:1761.3px;width:11.5px;height:12.7px;background:#fff;border:1px solid #dedede;box-sizing:border-box;"></div>
<svg class="a" style="left:171.9px;top:1766.3px;" width="7" height="5" viewBox="0 0 7 5"><path d="M0 0 H6.4 L3.2 4Z" fill="#1e8f63"/></svg>
<div class="a" style="left:396.5px;top:1761.3px;width:11.5px;height:12.7px;background:#fff;border:1px solid #dedede;box-sizing:border-box;"></div>
<svg class="a" style="left:399.1px;top:1766.3px;" width="7" height="5" viewBox="0 0 7 5"><path d="M0 0 H6.4 L3.2 4Z" fill="#1e8f63"/></svg>
<div class="a" style="left:471.7px;top:1761.3px;width:11.5px;height:12.7px;background:#fff;border:1px solid #dedede;box-sizing:border-box;"></div>
<svg class="a" style="left:474.3px;top:1766.3px;" width="7" height="5" viewBox="0 0 7 5"><path d="M0 0 H6.4 L3.2 4Z" fill="#1e8f63"/></svg>
<div class="a" style="left:509.5px;top:1761.3px;width:11.5px;height:12.7px;background:#fff;border:1px solid #dedede;box-sizing:border-box;"></div>
<svg class="a" style="left:512.1px;top:1766.3px;" width="7" height="5" viewBox="0 0 7 5"><path d="M0 0 H6.4 L3.2 4Z" fill="#1e8f63"/></svg>
<div class="a" style="left:591.6px;top:1761.3px;width:11.5px;height:12.7px;background:#fff;border:1px solid #dedede;box-sizing:border-box;"></div>
<svg class="a" style="left:594.2px;top:1766.3px;" width="7" height="5" viewBox="0 0 7 5"><path d="M0 0 H6.4 L3.2 4Z" fill="#1e8f63"/></svg>
<div class="a" style="left:656.3px;top:1761.3px;width:11.5px;height:12.7px;background:#fff;border:1px solid #dedede;box-sizing:border-box;"></div>
<svg class="a" style="left:658.9px;top:1766.3px;" width="7" height="5" viewBox="0 0 7 5"><path d="M0 0 H6.4 L3.2 4Z" fill="#1e8f63"/></svg>
<div class="a" style="left:721.0px;top:1761.3px;width:11.5px;height:12.7px;background:#fff;border:1px solid #dedede;box-sizing:border-box;"></div>
<svg class="a" style="left:723.6px;top:1766.3px;" width="7" height="5" viewBox="0 0 7 5"><path d="M0 0 H6.4 L3.2 4Z" fill="#1e8f63"/></svg>
<div class="a" style="left:772.2px;top:1761.3px;width:11.5px;height:12.7px;background:#fff;border:1px solid #dedede;box-sizing:border-box;"></div>
<svg class="a" style="left:774.8px;top:1766.3px;" width="7" height="5" viewBox="0 0 7 5"><path d="M0 0 H6.4 L3.2 4Z" fill="#1e8f63"/></svg>
<div class="a" style="left:824.0px;top:1761.3px;width:11.5px;height:12.7px;background:#fff;border:1px solid #dedede;box-sizing:border-box;"></div>
<svg class="a" style="left:826.6px;top:1766.3px;" width="7" height="5" viewBox="0 0 7 5"><path d="M0 0 H6.4 L3.2 4Z" fill="#1e8f63"/></svg>
<div class="a" style="left:873.6px;top:1761.3px;width:11.5px;height:12.7px;background:#fff;border:1px solid #dedede;box-sizing:border-box;"></div>
<svg class="a" style="left:876.2px;top:1766.3px;" width="7" height="5" viewBox="0 0 7 5"><path d="M0 0 H6.4 L3.2 4Z" fill="#1e8f63"/></svg>
<div class="a" style="left:915.5px;top:1761.3px;width:11.5px;height:12.7px;background:#fff;border:1px solid #dedede;box-sizing:border-box;"></div>
<svg class="a" style="left:918.1px;top:1766.3px;" width="7" height="5" viewBox="0 0 7 5"><path d="M0 0 H6.4 L3.2 4Z" fill="#1e8f63"/></svg>
<div class="a" style="left:484.2px;top:1905.0px;width:38.6px;height:27.3px;border:1.8px solid #1e8f63;box-sizing:border-box;"></div>
<div class="a" style="left:520.7px;top:1930.1px;width:3.6px;height:3.6px;background:#1e8f63;border:0.6px solid #fff;"></div>
<div class="a" style="left:1845.0px;top:1748.4px;width:15.0px;height:767.1px;background:#ebebeb;"></div>
<div class="a" style="left:1848.5px;top:1781.0px;width:7.3px;height:39.0px;background:#cecece;border-radius:3.5px;"></div>
<svg class="a" style="left:1848.5px;top:1764.0px;" width="7" height="5" viewBox="0 0 7 5"><path d="M0 5 H7 L3.5 0.5Z" fill="#777"/></svg>
<div class="a" style="left:1848.5px;top:1754.5px;width:7.0px;height:1.2px;background:#aaa;"></div>
<svg class="a" style="left:1848.5px;top:2501.5px;" width="7" height="5" viewBox="0 0 7 5"><path d="M0 0 H7 L3.5 4.5Z" fill="#777"/></svg>
<div class="a" style="left:0.0px;top:2515.5px;width:1860.0px;height:44.5px;background:#e9e9e9;"></div>
<div class="a" style="left:0.0px;top:2515.5px;width:1860.0px;height:1.0px;background:#d9d9d9;"></div>
<svg class="a" style="left:12.5px;top:2522.0px;" width="10" height="10" viewBox="0 0 10 10"><path d="M1.5 1 V9 M8 1 L4 5 L8 9" fill="none" stroke="#a0a0a0" stroke-width="1.2"/></svg>
<svg class="a" style="left:33.0px;top:2522.0px;" width="8" height="10" viewBox="0 0 8 10"><path d="M6 1 L2 5 L6 9" fill="none" stroke="#a0a0a0" stroke-width="1.2"/></svg>
<svg class="a" style="left:53.0px;top:2522.0px;" width="8" height="10" viewBox="0 0 8 10"><path d="M2 1 L6 5 L2 9" fill="none" stroke="#a0a0a0" stroke-width="1.2"/></svg>
<svg class="a" style="left:71.0px;top:2522.0px;" width="10" height="10" viewBox="0 0 10 10"><path d="M2 1 L6 5 L2 9 M8.5 1 V9" fill="none" stroke="#a0a0a0" stroke-width="1.2"/></svg>
<div class="a" style="left:164.9px;top:2516.0px;width:56.5px;height:22.0px;background:#fff;border-radius:0 0 5px 5px;"></div>
<span class="t" id="t227" style="top:2518.8px;font-size:11.5px;line-height:16px;color:#333;letter-spacing:0.211px;left:103.0px;">Accounts</span>
<span class="t" id="t228" style="top:2518.8px;font-size:11.5px;line-height:16px;color:#1a7f5a;font-weight:700;letter-spacing:-0.074px;left:173.6px;">Ledger</span>
<span class="t" id="t229" style="top:2518.8px;font-size:11.5px;line-height:16px;color:#333;letter-spacing:0.317px;left:231.3px;">Reports</span>
<span class="t" id="t230" style="top:2518.8px;font-size:11.5px;line-height:16px;color:#333;letter-spacing:-0.152px;left:295.3px;">Expense</span>
<span class="t" id="t231" style="top:2518.8px;font-size:11.5px;line-height:16px;color:#333;letter-spacing:0.314px;left:361.2px;">Income</span>
<span class="t" id="t232" style="top:2518.8px;font-size:11.5px;line-height:16px;color:#333;letter-spacing:0.060px;left:422.3px;">AssetsFlow</span>
<span class="t" id="t233" style="top:2518.8px;font-size:11.5px;line-height:16px;color:#333;letter-spacing:0.458px;left:502.0px;">Budget</span>
<span class="t" id="t234" style="top:2518.8px;font-size:11.5px;line-height:16px;color:#333;letter-spacing:-0.002px;left:562.7px;">Check</span>
<div class="a" style="left:283.7px;top:2521.0px;width:1.0px;height:12.0px;background:#d0d0d0;"></div>
<div class="a" style="left:350.0px;top:2521.0px;width:1.0px;height:12.0px;background:#d0d0d0;"></div>
<div class="a" style="left:411.8px;top:2521.0px;width:1.0px;height:12.0px;background:#d0d0d0;"></div>
<div class="a" style="left:492.2px;top:2521.0px;width:1.0px;height:12.0px;background:#d0d0d0;"></div>
<div class="a" style="left:551.6px;top:2521.0px;width:1.0px;height:12.0px;background:#d0d0d0;"></div>
<div class="a" style="left:605.8px;top:2521.0px;width:1.0px;height:12.0px;background:#d0d0d0;"></div>
<svg class="a" style="left:611.0px;top:2522.0px;" width="10" height="10" viewBox="0 0 10 10"><path d="M5 0.5 V9.5 M0.5 5 H9.5" stroke="#222" stroke-width="1.6"/></svg>
<div class="a" style="left:1101.0px;top:2522.0px;width:1.0px;height:9.0px;background:#aaa;"></div>
<svg class="a" style="left:1113.5px;top:2523.5px;" width="6" height="7" viewBox="0 0 6 7"><path d="M5.5 0 V7 L0.5 3.5Z" fill="#666"/></svg>
<div class="a" style="left:1128.0px;top:2522.5px;width:644.5px;height:7.5px;background:#cdcdcd;border-radius:4px;"></div>
<svg class="a" style="left:1824.0px;top:2523.5px;" width="6" height="7" viewBox="0 0 6 7"><path d="M0.5 0 V7 L5.5 3.5Z" fill="#666"/></svg>
<div class="a" style="left:1840.5px;top:2522.0px;width:1.0px;height:9.0px;background:#aaa;"></div>
<div class="a" style="left:0.0px;top:2538.0px;width:1860.0px;height:1.0px;background:#dcdcdc;"></div>
<svg class="a" style="left:15.0px;top:2543.0px;" width="13" height="12" viewBox="0 0 13 12"><path d="M1 1 H5 V5 H1Z M8 1 H12 V4 H8Z M3 5 V10 H9 M9 8 V11.5 H12 V8Z" fill="none" stroke="#555" stroke-width="1.1"/></svg>
<svg class="a" style="left:44.0px;top:2543.0px;" width="13" height="12" viewBox="0 0 13 12"><path d="M1 1 H12 V11 H1Z M1 4 H12 M5 4 V11" fill="none" stroke="#555" stroke-width="1.1"/><path d="M7 6.5 H10.5 M7 8.8 H10.5" stroke="#555" stroke-width="1"/></svg>
<svg class="a" style="left:1403.0px;top:2542.0px;" width="15" height="13" viewBox="0 0 15 13"><path d="M1 1 H12 V6 M1 1 V11 H7 M1 4.3 H12 M1 7.6 H7 M5 1 V11" fill="none" stroke="#555" stroke-width="1.1"/><circle cx="11" cy="10" r="2.6" fill="none" stroke="#555" stroke-width="1.1"/></svg>
<svg class="a" style="left:1432.0px;top:2544.0px;" width="15" height="10" viewBox="0 0 15 10"><path d="M1 5 Q7.5 -2.5 14 5 Q7.5 12.5 1 5Z" fill="none" stroke="#555" stroke-width="1.1"/><circle cx="7.5" cy="5" r="2" fill="none" stroke="#555" stroke-width="1.1"/></svg>
<svg class="a" style="left:1464.0px;top:2542.0px;" width="14" height="14" viewBox="0 0 14 14"><rect x="4.5" y="1" width="5" height="12" rx="1.5" fill="none" stroke="#555" stroke-width="1.1"/><rect x="1" y="4.5" width="12" height="5" rx="1.5" fill="none" stroke="#555" stroke-width="1.1"/></svg>
<svg class="a" style="left:1480.9px;top:2547.3px;" width="6.2" height="4.8100000000000005" viewBox="0 0 6.2 4.8100000000000005"><path d="M1 1 L3.10 2.91 L5.2 1" fill="none" stroke="#444" stroke-width="1.5" stroke-linecap="round" stroke-linejoin="round"/></svg>
<div class="a" style="left:1497.5px;top:2541.0px;width:1.0px;height:16.0px;background:#d0d0d0;"></div>
<div class="a" style="left:1507.8px;top:2539.5px;width:21.8px;height:19.5px;background:#d4d4d4;border-radius:3px;"></div>
<svg class="a" style="left:1512.0px;top:2543.0px;" width="13" height="12" viewBox="0 0 13 12"><path d="M1 1 H12 V11 H1Z M1 4.3 H12 M5 4.3 V11" fill="none" stroke="#555" stroke-width="1.1"/></svg>
<svg class="a" style="left:1542.0px;top:2543.0px;" width="13" height="12" viewBox="0 0 13 12"><path d="M1 1 H12 V11 H1Z M6.5 1 V11" fill="none" stroke="#555" stroke-width="1.1"/></svg>
<svg class="a" style="left:1570.0px;top:2543.0px;" width="13" height="12" viewBox="0 0 13 12"><path d="M1 1 H12 V11 H1Z M7 7 H12 V11 H7Z" fill="none" stroke="#555" stroke-width="1.1"/></svg>
<div class="a" style="left:1594.0px;top:2541.0px;width:1.0px;height:16.0px;background:#d0d0d0;"></div>
<span class="t" id="t235" style="top:2541.8px;font-size:11px;line-height:15px;color:#444;letter-spacing:-0.035px;left:1611.0px;">100%</span>
<svg class="a" style="left:1648.9px;top:2547.3px;" width="6.2" height="4.8100000000000005" viewBox="0 0 6.2 4.8100000000000005"><path d="M1 1 L3.10 2.91 L5.2 1" fill="none" stroke="#444" stroke-width="1.5" stroke-linecap="round" stroke-linejoin="round"/></svg>
<div class="a" style="left:1671.0px;top:2548.2px;width:11.0px;height:1.6px;background:#333;"></div>
<div class="a" style="left:1695.5px;top:2548.2px;width:44.0px;height:1.6px;background:#3a78c9;"></div>
<div class="a" style="left:1738.0px;top:2532.8px;width:115.0px;height:23.6px;background:#fff;border-radius:5px;box-shadow:0 0 3px rgba(0,0,0,.25);"></div>
<span class="t" id="t236" style="top:2531.0px;font-size:19px;line-height:27px;color:#f06a1a;font-weight:700;left:1453.0px;width:600px;text-align:center;font-style:italic;transform:scale(1.35,0.8);">S</span>
<div class="a" style="left:1770.0px;top:2537.0px;width:1.0px;height:15.0px;background:#ddd;"></div>
<span class="t" id="t237" style="top:2533.8px;font-size:16px;line-height:22px;color:#111;left:1486.0px;width:600px;text-align:center;">中</span>
<svg class="a" style="left:1805.0px;top:2536.5px;" width="17" height="16" viewBox="0 0 17 16"><path d="M10 1.5 Q16 7 11 13 Q7 16 2 13.5 Q10 13 10 1.5Z" fill="none" stroke="#222" stroke-width="1.5" stroke-linejoin="round"/></svg>
<span class="t" id="t238" style="top:2533.5px;font-size:15px;line-height:21px;color:#111;font-weight:700;left:1538.0px;width:600px;text-align:center;">°,</span>
</div></body></html>
